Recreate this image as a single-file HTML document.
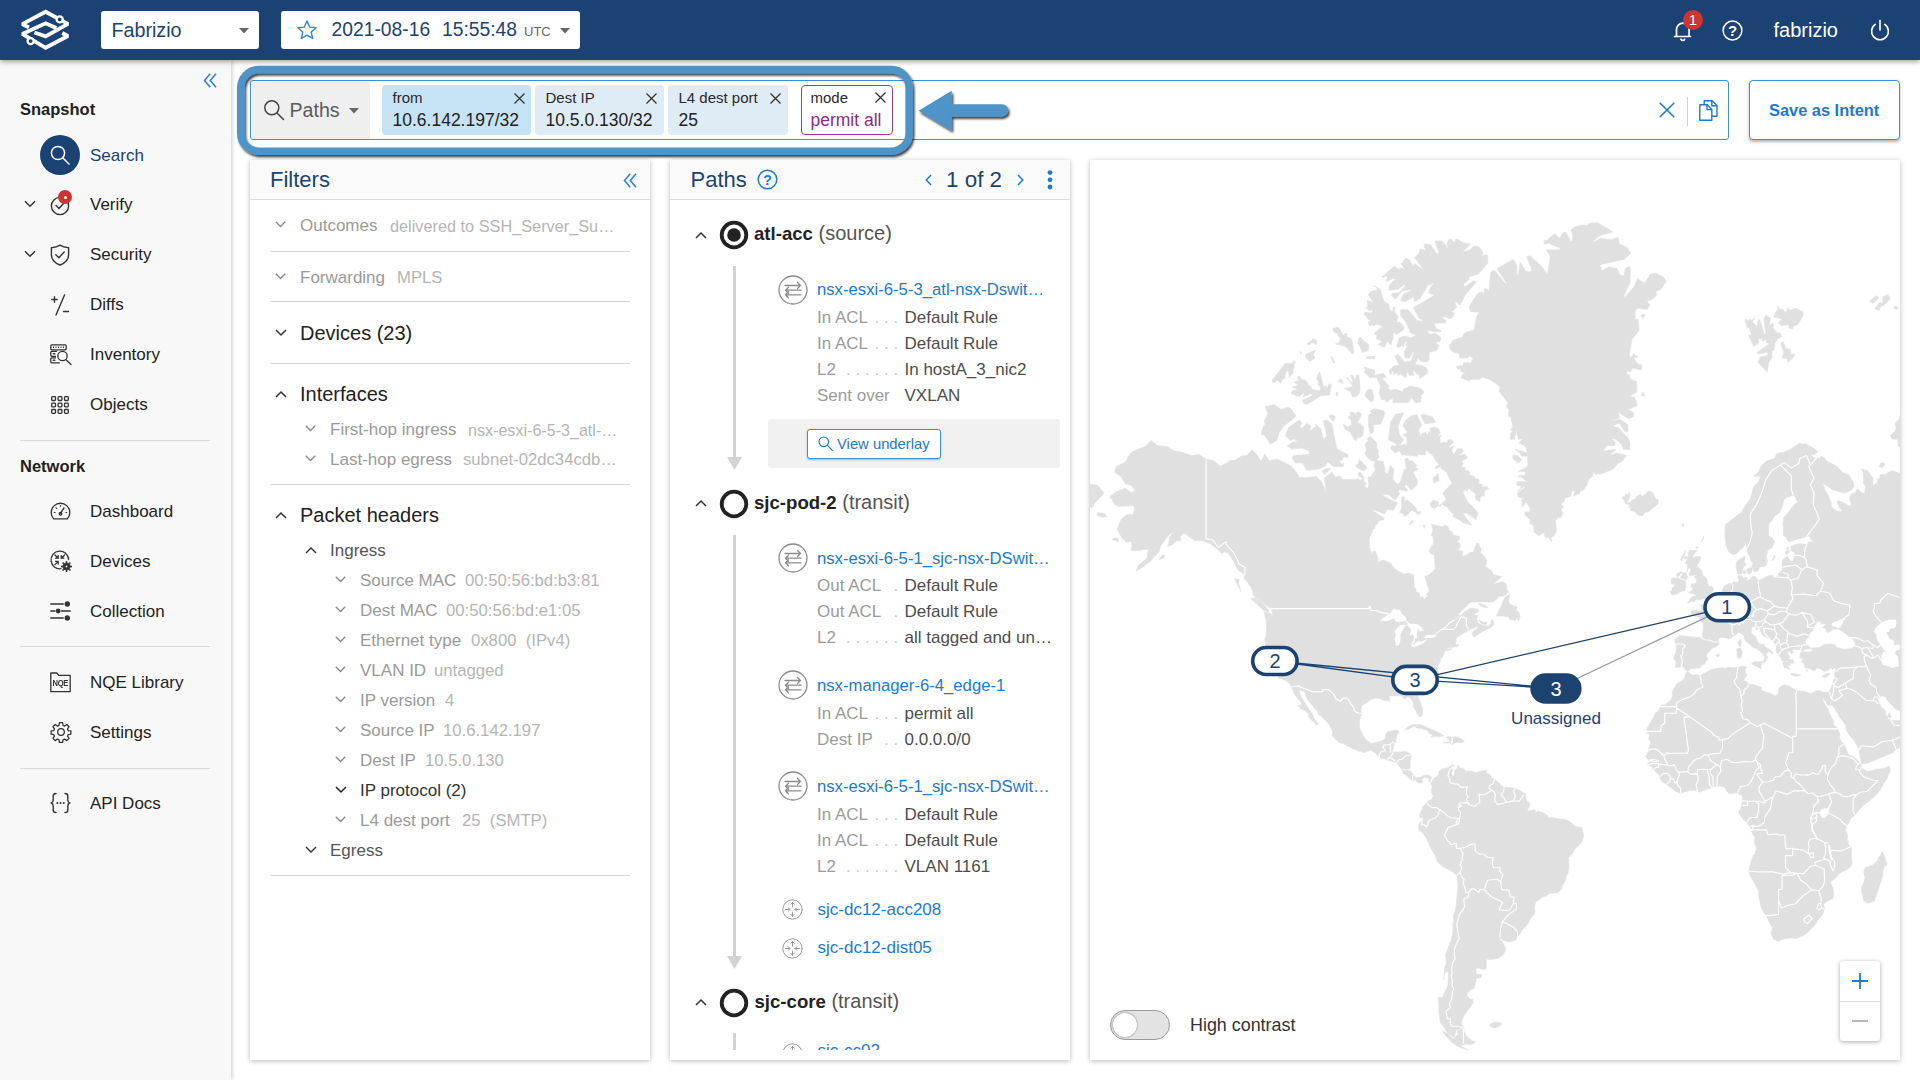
<!DOCTYPE html>
<html lang="en">
<head>
<meta charset="utf-8">
<title>Forward Enterprise - Search</title>
<style>
*{box-sizing:border-box;margin:0;padding:0}
html,body{width:1920px;height:1080px;overflow:hidden;background:#fff}
body{font-family:"Liberation Sans",sans-serif;font-size:17px;color:#222;position:relative}
.a{position:absolute}
.t{position:absolute;white-space:nowrap;line-height:24px;height:24px}
svg{position:absolute;overflow:visible}
/* header */
#hdr{left:0;top:0;width:1920px;height:60px;background:#1b4272;box-shadow:0 2px 5px rgba(0,0,0,.35);z-index:20}
.sel{background:#fff;border-radius:3px;top:11px;height:38px}
.navy{color:#1c4370}
.blue{color:#1d7ad0}
/* sidebar */
#side{left:0;top:60px;width:231px;height:1020px;background:#f8f8f8;box-shadow:1px 0 4px rgba(0,0,0,.22);z-index:10}
.nav{font-size:17px;color:#222;left:90px;margin-top:1px}
.hd{font-weight:bold;font-size:16.5px;color:#222;left:20px}
.sep{position:absolute;left:20px;width:190px;height:1px;background:#d9d9d9}
/* panels */
.panel{background:#fff;box-shadow:0 1px 5px rgba(0,0,0,.28);top:160px;height:900px;overflow:hidden}
.phead{position:absolute;left:0;top:0;right:0;height:40px;background:#fafafa;border-bottom:1px solid #dcdcdc}
.ptitle{font-size:22px;color:#1c4370;top:8px}
.g{color:#9a9a9a}
.gv{color:#b5b5b5;font-size:16.700px}
.t.g,.t.gv,.t.m{margin-top:1.500px}
.t.s20{margin-top:.5px}
.d{color:#222}
.m{color:#555}
.s20{font-size:20px}
.hr{position:absolute;left:20px;width:360px;height:1px;background:#d6d6d6}
.lnk{color:#1d7ad0;font-size:17px;margin-top:1px}
.lab{color:#9b9b9b;font-size:17px;left:147px;margin-top:1.500px}
.val{color:#4d4d4d;font-size:17px;left:234.500px;margin-top:1.500px}
.dots{color:#c8c8c8;font-size:17px;letter-spacing:4.770px;margin-top:1.500px}
.chip{top:85px;height:50px;border-radius:4px}
.cl{font-size:15px;color:#2a2a2a;line-height:20px;top:3px;left:10.5px}
.cv{font-size:17.5px;color:#222;line-height:22px;top:24px;left:10.5px}
</style>
</head>
<body>
<!-- ================= HEADER ================= -->
<div id="hdr" class="a">
  <!-- logo -->
  <svg style="left:0;top:0" width="90" height="60" viewBox="0 0 90 60" fill="none" stroke="#fff" stroke-width="3.900" stroke-linejoin="miter" stroke-miterlimit="2">
    <path d="M28.900 27.500L22.300 24.100L45.600 11.800L67.900 23.900L45.600 36.400L34.400 32.500"/>
    <path d="M56.400 28.100L45.600 23.300L22.300 33.900L45.600 47.800L67.900 36.100L62.200 33.100"/>
    <circle cx="59.700" cy="19.400" r="3.050" fill="#1b4272" stroke-width="2.300"/>
    <circle cx="30.600" cy="41.100" r="3.050" fill="#1b4272" stroke-width="2.300"/>
  </svg>
  <div class="a sel" style="left:101px;width:158px"></div>
  <div class="t navy" style="left:111.5px;top:18px;font-size:19.7px">Fabrizio</div>
  <svg style="left:239px;top:28px" width="10" height="6" viewBox="0 0 10 6"><path d="M0 0H10L5 5.5Z" fill="#666"/></svg>

  <div class="a sel" style="left:281px;width:299px"></div>
  <svg style="left:296px;top:19px" width="22" height="22" viewBox="0 0 24 24" fill="none" stroke="#2a86d9" stroke-width="1.5" stroke-linejoin="round"><path d="M12 2.2l2.9 6.6 7.1.7-5.4 4.8 1.6 7-6.2-3.7-6.2 3.7 1.6-7L2 9.5l7.1-.7z"/></svg>
  <div class="t navy" style="left:331.5px;top:18px;font-size:19.3px">2021-08-16</div>
  <div class="t navy" style="left:442px;top:18px;font-size:19.3px">15:55:48</div>
  <div class="t" style="left:524px;top:20px;font-size:13px;color:#666">UTC</div>
  <svg style="left:560px;top:28px" width="10" height="6" viewBox="0 0 10 6"><path d="M0 0H10L5 5.5Z" fill="#666"/></svg>

  <!-- right icons -->
  <svg style="left:1672px;top:19px" width="22" height="23" viewBox="0 0 22 23" fill="none" stroke="#fff" stroke-width="1.7" stroke-linecap="round" stroke-linejoin="round"><path d="M2.5 17.5h16M4.5 17.5V10.5a6.3 6.3 0 0 1 12.6 0v7"/><path d="M9 20.3a2 2 0 0 0 3.6 0" stroke-width="1.8"/></svg>
  <div class="a" style="left:1683px;top:10px;width:20px;height:20px;border-radius:10px;background:#cb3632"></div>
  <div class="t" style="left:1683px;top:8px;width:20px;text-align:center;color:#fff;font-size:15px">1</div>
  <svg style="left:1722px;top:19.5px" width="21" height="21" viewBox="0 0 21 21" fill="none" stroke="#fff" stroke-width="1.5"><circle cx="10.5" cy="10.5" r="9.4"/></svg>
  <div class="t" style="left:1722px;top:18.5px;width:21px;text-align:center;color:#fff;font-size:15px;font-weight:bold">?</div>
  <div class="t" style="left:1773.5px;top:18px;font-size:20px;color:#fff">fabrizio</div>
  <svg style="left:1869px;top:19px" width="22" height="22" viewBox="0 0 22 22" fill="none" stroke="#fff" stroke-width="1.6" stroke-linecap="round"><path d="M6.2 5.4a8.4 8.4 0 1 0 9.6 0"/><path d="M11 1.5v9.5"/></svg>
</div>

<!-- ================= SIDEBAR ================= -->
<div id="side" class="a">
  <svg style="left:203px;top:13px" width="14" height="15" viewBox="0 0 14 15" fill="none" stroke="#2d7dd2" stroke-width="1.5"><path d="M7.2 0.8L1.5 7.5l5.7 6.7M13 0.8L7.3 7.5l5.7 6.7"/></svg>
  <div class="t hd" style="top:37px">Snapshot</div>
  <!-- Search (active) -->
  <div class="a" style="left:40px;top:75px;width:40px;height:40px;border-radius:20px;background:#1b4272"></div>
  <svg style="left:49px;top:84px" width="22" height="22" viewBox="0 0 22 22" fill="none" stroke="#fff" stroke-width="1.5" stroke-linecap="round"><circle cx="9" cy="9" r="6.6"/><path d="M14 14l6 6"/></svg>
  <div class="t nav" style="top:83px;color:#1c4370">Search</div>

  <!-- Verify -->
  <svg style="left:24px;top:140px" width="12" height="8" viewBox="0 0 12 8" fill="none" stroke="#333" stroke-width="1.5"><path d="M1 1.2l5 5 5-5"/></svg>
  <svg style="left:50px;top:134px" width="22" height="22" viewBox="0 0 22 22" fill="none" stroke="#333" stroke-width="1.4" stroke-linecap="round" stroke-linejoin="round"><circle cx="10" cy="12" r="8.6"/><path d="M6 11.5l3 3 4.5-5"/></svg>
  <div class="a" style="left:58px;top:130px;width:14px;height:14px;border-radius:7px;background:#cb3632"></div>
  <div class="a" style="left:63.5px;top:135.5px;width:3px;height:3px;border-radius:2px;background:#fff"></div>
  <div class="t nav" style="top:132px">Verify</div>

  <!-- Security -->
  <svg style="left:24px;top:190px" width="12" height="8" viewBox="0 0 12 8" fill="none" stroke="#333" stroke-width="1.5"><path d="M1 1.2l5 5 5-5"/></svg>
  <svg style="left:50px;top:184px" width="20" height="22" viewBox="0 0 20 22" fill="none" stroke="#333" stroke-width="1.4" stroke-linecap="round" stroke-linejoin="round"><path d="M10 1.2c2.6 1.8 5.4 2.4 8.6 2.6v7c0 5-3.6 8.4-8.6 10.2C5 19.2 1.400 15.800 1.400 10.800v-7c3.200-.2 6-.8 8.600-2.600z"/><path d="M5.8 10.800l3 3 5.400-5.800"/></svg>
  <div class="t nav" style="top:182px">Security</div>

  <!-- Diffs -->
  <svg style="left:50px;top:233px" width="22" height="24" viewBox="0 0 22 24" fill="none" stroke="#333" stroke-width="1.4" stroke-linecap="round"><path d="M14.500 2L6 22M1.800 6.500h5.400M4.500 3.800v5.400M13.500 18.500h5"/></svg>
  <div class="t nav" style="top:232px">Diffs</div>

  <!-- Inventory -->
  <svg style="left:50px;top:284px" width="24" height="22" viewBox="0 0 24 22" fill="none" stroke="#333" stroke-width="1.300" stroke-linejoin="round"><rect x=".8" y=".8" width="15.400" height="5" rx="1"/><path d="M3 3.300h1M5.500 3.300h1M8 3.300h1M10.500 3.300h1M13 3.300h1" stroke-width="1.400"/><path d="M7 7.300H1.800a1 1 0 0 0-1 1v3a1 1 0 0 0 1 1H6M6 13.800H1.800a1 1 0 0 0-1 1v3a1 1 0 0 0 1 1h8"/><path d="M2.800 9.800h2.500M2.800 16.300h2.500" stroke-width="1.500"/><circle cx="12.500" cy="12" r="4.700"/><path d="M16 15.800l5 4.700" stroke-linecap="round"/></svg>
  <div class="t nav" style="top:282px">Inventory</div>

  <!-- Objects -->
  <svg style="left:51px;top:336px" width="18" height="18" viewBox="0 0 18 18" fill="none" stroke="#333" stroke-width="1.300"><rect x=".7" y=".7" width="3.800" height="3.800" rx=".8"/><rect x="7.100" y=".7" width="3.800" height="3.800" rx=".8"/><rect x="13.500" y=".7" width="3.800" height="3.800" rx=".8"/><rect x=".7" y="7.100" width="3.800" height="3.800" rx=".8"/><rect x="7.100" y="7.100" width="3.800" height="3.800" rx=".8"/><rect x="13.500" y="7.100" width="3.800" height="3.800" rx=".8"/><rect x=".7" y="13.500" width="3.800" height="3.800" rx=".8"/><rect x="7.100" y="13.500" width="3.800" height="3.800" rx=".8"/><rect x="13.500" y="13.500" width="3.800" height="3.800" rx=".8"/></svg>
  <div class="t nav" style="top:332px">Objects</div>

  <div class="sep" style="top:380px"></div>
  <div class="t hd" style="top:394px">Network</div>

  <!-- Dashboard -->
  <svg style="left:50px;top:441px" width="21" height="20" viewBox="0 0 21 20" fill="none" stroke="#333" stroke-width="1.300" stroke-linecap="round" stroke-linejoin="round"><path d="M3.600 17.800A9.300 9.300 0 1 1 17.400 17.800Z"/><path d="M10.500 12.300l3.500-5.500"/><circle cx="10.500" cy="12.800" r="1.300"/><path d="M4.300 11.500h.8M6 6.800l.6.600M10.500 4.500v.8M16 11.500h.7" stroke-width="1.200"/></svg>
  <div class="t nav" style="top:439px">Dashboard</div>

  <!-- Devices -->
  <svg style="left:50px;top:490px" width="23" height="23" viewBox="0 0 23 23" fill="none" stroke="#333" stroke-width="1.300" stroke-linecap="round" stroke-linejoin="round"><path d="M11 18.700A8.800 8.800 0 1 1 18.600 9.500"/><path d="M5 5l3.200 3.200M8.200 5.600v2.600H5.600M14.600 5l-3.200 3.200M13.800 8.200h-2.600V5.600M5 14.600l3.200-3.200M5.600 11.400h2.600V14"/><circle cx="16.500" cy="16.500" r="2.200" stroke-width="2.600"/><path d="M16.500 11.800v1.500M16.500 19.700v1.500M11.800 16.500h1.500M19.700 16.500h1.500M13.200 13.200l1 1M18.800 18.800l1 1M13.200 19.800l1-1M18.800 14.200l1-1" stroke-width="1.800"/></svg>
  <div class="t nav" style="top:489px">Devices</div>

  <!-- Collection -->
  <svg style="left:50px;top:541px" width="21" height="20" viewBox="0 0 21 20" fill="none" stroke="#333" stroke-width="1.400" stroke-linecap="round"><path d="M.8 3h12.400M.8 10h4.200M11.500 10h8.700M.8 17h12.400"/><circle cx="17.300" cy="3" r="2" fill="#333"/><circle cx="8.200" cy="10" r="1.700" fill="#333"/><circle cx="17.300" cy="17" r="2" fill="#333"/></svg>
  <div class="t nav" style="top:539px">Collection</div>

  <div class="sep" style="top:586px"></div>

  <!-- NQE Library -->
  <svg style="left:50px;top:612px" width="21" height="21" viewBox="0 0 21 21" fill="none" stroke="#333" stroke-width="1.300" stroke-linejoin="round"><path d="M.8 19.700V1h6l2 2.300h11.400v16.400z"/></svg>
  <div class="t" style="left:52.500px;top:617px;font-size:7.600px;font-weight:bold;color:#333;line-height:12px;height:12px;letter-spacing:-.3px;transform:scaleY(1.3)">NQE</div>
  <div class="t nav" style="top:610px">NQE Library</div>

  <!-- Settings -->
  <svg style="left:50px;top:661px" width="22" height="22" viewBox="0 0 24 24" fill="none" stroke="#333" stroke-width="1.400" stroke-linejoin="round"><circle cx="12" cy="12" r="3.600"/><path d="M10.300 1.800h3.400l.5 2.900 1.800.8 2.400-1.700 2.400 2.400-1.700 2.400.8 1.800 2.900.5v3.400l-2.900.5-.8 1.800 1.700 2.400-2.400 2.400-2.400-1.700-1.800.8-.5 2.900h-3.400l-.5-2.900-1.800-.8-2.400 1.700-2.400-2.400 1.700-2.400-.8-1.800-2.900-.5v-3.400l2.900-.5.800-1.800-1.700-2.400 2.400-2.400 2.400 1.700 1.800-.8z"/></svg>
  <div class="t nav" style="top:660px">Settings</div>

  <div class="sep" style="top:708px"></div>

  <!-- API Docs -->
  <svg style="left:50px;top:732px" width="21" height="22" viewBox="0 0 21 22" fill="none" stroke="#333" stroke-width="1.400" stroke-linecap="round" stroke-linejoin="round"><path d="M6 1.500c-2 0-2.800.8-2.800 2.600v4c0 1.600-.6 2.500-2 2.900 1.400.4 2 1.300 2 2.900v4c0 1.800.8 2.600 2.800 2.600M15 1.500c2 0 2.800.8 2.800 2.600v4c0 1.600.6 2.500 2 2.900-1.400.4-2 1.300-2 2.900v4c0 1.800-.8 2.600-2.800 2.600"/><path d="M7.300 11h.1M10.500 11h.1M13.700 11h.1" stroke-width="1.900"/></svg>
  <div class="t nav" style="top:731px">API Docs</div>
</div>
<!-- ================= SEARCH BAR ================= -->
<div class="a" style="left:250px;top:80px;width:1479px;height:60px;border:1.5px solid #3d8fd8;border-radius:3px;background:#fff"></div>
<div class="a" style="left:251.5px;top:81.5px;width:118px;height:57px;background:#efefef;border-radius:2px 0 0 2px"></div>
<svg style="left:263px;top:99px" width="22" height="22" viewBox="0 0 22 22" fill="none" stroke="#444" stroke-width="1.5" stroke-linecap="round"><circle cx="8.800" cy="8.800" r="7"/><path d="M14 14l6.500 6.500"/></svg>
<div class="t" style="left:289.500px;top:98px;font-size:19.600px;color:#5a5a5a">Paths</div>
<svg style="left:349px;top:107.500px" width="10" height="6" viewBox="0 0 10 6"><path d="M0 0H10L5 5.500Z" fill="#666"/></svg>

<!-- chips -->
<div class="a chip" style="left:382px;width:149px;background:#c6e2f5">
  <div class="t cl">from</div><div class="t cv">10.6.142.197/32</div>
  <svg style="left:131.500px;top:7.500px" width="11" height="11" viewBox="0 0 11 11" stroke="#333" stroke-width="1.300"><path d="M.5.5l10 10M10.500.5l-10 10"/></svg>
</div>
<div class="a chip" style="left:535px;width:129px;background:#dfecf6">
  <div class="t cl">Dest IP</div><div class="t cv">10.5.0.130/32</div>
  <svg style="left:111px;top:7.500px" width="11" height="11" viewBox="0 0 11 11" stroke="#333" stroke-width="1.300"><path d="M.5.5l10 10M10.500.5l-10 10"/></svg>
</div>
<div class="a chip" style="left:668px;width:120px;background:#dfecf6">
  <div class="t cl">L4 dest port</div><div class="t cv">25</div>
  <svg style="left:102px;top:7.500px" width="11" height="11" viewBox="0 0 11 11" stroke="#333" stroke-width="1.300"><path d="M.5.5l10 10M10.500.5l-10 10"/></svg>
</div>
<div class="a chip" style="left:801px;width:92px;background:#fff;border:1.500px solid #9b3a95;border-radius:4px">
  <div class="t cl" style="left:8.500px;top:1.500px">mode</div><div class="t cv" style="left:8.500px;top:22.500px;color:#8e2a8a">permit all</div>
  <svg style="left:73px;top:6px" width="11" height="11" viewBox="0 0 11 11" stroke="#333" stroke-width="1.300"><path d="M.5.5l10 10M10.500.5l-10 10"/></svg>
</div>

<!-- highlight box + arrow annotation -->
<svg style="left:0;top:0;z-index:15" width="1920" height="200" viewBox="0 0 1920 200" fill="none">
  <defs><filter id="sh" x="-5%" y="-20%" width="110%" height="150%"><feDropShadow dx="1.500" dy="2.200" stdDeviation="1.100" flood-color="#000" flood-opacity=".75"/></filter></defs>
  <rect x="240.800" y="69.600" width="668.400" height="81.600" rx="18" ry="18" stroke="#4f94c9" stroke-width="7.600" filter="url(#sh)"/>
  <path d="M918.500 110.800L951.700 90.800V104.200H1002a6.250 6.250 0 0 1 0 12.500H951.700V130.800Z" fill="#4f94c9" filter="url(#sh)"/>
</svg>

<!-- right side of search input -->
<svg style="left:1659px;top:102px" width="16" height="16" viewBox="0 0 16 16" stroke="#1d7ad0" stroke-width="1.500"><path d="M.7.7l14.600 14.600M15.300.7L.7 15.300"/></svg>
<div class="a" style="left:1687px;top:97px;width:1px;height:29px;background:#d0d0d0"></div>
<svg style="left:1699px;top:99.500px" width="19" height="21" viewBox="0 0 19 21" fill="none" stroke="#1d7ad0" stroke-width="1.400" stroke-linejoin="round"><path d="M5.200 4.800V.8h8l4.800 4.800v10.600h-5.200"/><path d="M12.800.8v5h5"/><path d="M.8 4.800h7.500l4.500 4.500v11H.8z"/><path d="M8 4.800v4.800h4.800"/></svg>
<div class="a" style="left:1749px;top:80px;width:151px;height:60px;border:1.500px solid #3d8fd8;border-radius:4px;background:#fff;box-shadow:0 1.500px 3px rgba(0,0,0,.3)"></div>
<div class="t" style="left:1769px;top:98px;font-size:16.400px;font-weight:bold;color:#1d7ad0">Save as Intent</div>

<!-- ================= FILTERS PANEL ================= -->
<div class="a panel" style="left:250px;width:400px">
  <div class="phead"></div>
  <div class="t ptitle" style="left:20px">Filters</div>
  <svg style="left:373px;top:12.500px" width="14" height="15" viewBox="0 0 14 15" fill="none" stroke="#2d7dd2" stroke-width="1.500"><path d="M7.200.8L1.500 7.500l5.700 6.700M13 .8L7.300 7.500l5.700 6.700"/></svg>

  <svg class="cd" style="left:25px;top:61px" width="11" height="7" viewBox="0 0 11 7" fill="none" stroke="#888" stroke-width="1.300"><path d="M.8.8l4.700 4.700L10.200.8"/></svg>
  <div class="t g" style="left:50px;top:52px">Outcomes</div><div class="t gv" style="left:140px;top:52px;font-size:16.300px">delivered to SSH_Server_Su…</div>
  <div class="hr" style="top:91px"></div>
  <svg style="left:25px;top:113px" width="11" height="7" viewBox="0 0 11 7" fill="none" stroke="#888" stroke-width="1.300"><path d="M.8.8l4.700 4.700L10.200.8"/></svg>
  <div class="t g" style="left:50px;top:104px">Forwarding</div><div class="t gv" style="left:147px;top:104px">MPLS</div>
  <div class="hr" style="top:141px"></div>
  <svg style="left:24.500px;top:169px" width="12" height="8" viewBox="0 0 12 8" fill="none" stroke="#333" stroke-width="1.500"><path d="M1 1l5 5 5-5"/></svg>
  <div class="t d s20" style="left:50px;top:160px">Devices (23)</div>
  <div class="hr" style="top:203px"></div>
  <svg style="left:24.500px;top:230px" width="12" height="8" viewBox="0 0 12 8" fill="none" stroke="#333" stroke-width="1.500"><path d="M1 7l5-5 5 5"/></svg>
  <div class="t d s20" style="left:50px;top:221px">Interfaces</div>
  <svg style="left:55px;top:265px" width="11" height="7" viewBox="0 0 11 7" fill="none" stroke="#888" stroke-width="1.300"><path d="M.8.8l4.700 4.700L10.200.8"/></svg>
  <div class="t g" style="left:80px;top:256px">First-hop ingress</div><div class="t gv" style="left:218px;top:256px;font-size:16.100px">nsx-esxi-6-5-3_atl-…</div>
  <svg style="left:55px;top:295px" width="11" height="7" viewBox="0 0 11 7" fill="none" stroke="#888" stroke-width="1.300"><path d="M.8.8l4.700 4.700L10.200.8"/></svg>
  <div class="t g" style="left:80px;top:286px">Last-hop egress</div><div class="t gv" style="left:213px;top:286px">subnet-02dc34cdb…</div>
  <div class="hr" style="top:324px"></div>
  <svg style="left:24.500px;top:351px" width="12" height="8" viewBox="0 0 12 8" fill="none" stroke="#333" stroke-width="1.500"><path d="M1 7l5-5 5 5"/></svg>
  <div class="t d s20" style="left:50px;top:342px">Packet headers</div>
  <svg style="left:54.500px;top:385.500px" width="12" height="8" viewBox="0 0 12 8" fill="none" stroke="#333" stroke-width="1.400"><path d="M1 7l5-5 5 5"/></svg>
  <div class="t m" style="left:80px;top:377px">Ingress</div>

  <svg style="left:85px;top:416px" width="11" height="7" viewBox="0 0 11 7" fill="none" stroke="#888" stroke-width="1.300"><path d="M.8.8l4.700 4.700L10.200.8"/></svg>
  <div class="t g" style="left:110px;top:407px">Source MAC</div><div class="t gv" style="left:215px;top:407px">00:50:56:bd:b3:81</div>
  <svg style="left:85px;top:446px" width="11" height="7" viewBox="0 0 11 7" fill="none" stroke="#888" stroke-width="1.300"><path d="M.8.8l4.700 4.700L10.200.8"/></svg>
  <div class="t g" style="left:110px;top:437px">Dest MAC</div><div class="t gv" style="left:196px;top:437px">00:50:56:bd:e1:05</div>
  <svg style="left:85px;top:476px" width="11" height="7" viewBox="0 0 11 7" fill="none" stroke="#888" stroke-width="1.300"><path d="M.8.8l4.700 4.700L10.200.8"/></svg>
  <div class="t g" style="left:110px;top:467px">Ethernet type</div><div class="t gv" style="left:221px;top:467px">0x800&nbsp; (IPv4)</div>
  <svg style="left:85px;top:506px" width="11" height="7" viewBox="0 0 11 7" fill="none" stroke="#888" stroke-width="1.300"><path d="M.8.8l4.700 4.700L10.200.8"/></svg>
  <div class="t g" style="left:110px;top:497px">VLAN ID</div><div class="t gv" style="left:184px;top:497px">untagged</div>
  <svg style="left:85px;top:536px" width="11" height="7" viewBox="0 0 11 7" fill="none" stroke="#888" stroke-width="1.300"><path d="M.8.8l4.700 4.700L10.200.8"/></svg>
  <div class="t g" style="left:110px;top:527px">IP version</div><div class="t gv" style="left:195px;top:527px">4</div>
  <svg style="left:85px;top:566px" width="11" height="7" viewBox="0 0 11 7" fill="none" stroke="#888" stroke-width="1.300"><path d="M.8.8l4.700 4.700L10.200.8"/></svg>
  <div class="t g" style="left:110px;top:557px">Source IP</div><div class="t gv" style="left:193px;top:557px">10.6.142.197</div>
  <svg style="left:85px;top:596px" width="11" height="7" viewBox="0 0 11 7" fill="none" stroke="#888" stroke-width="1.300"><path d="M.8.8l4.700 4.700L10.200.8"/></svg>
  <div class="t g" style="left:110px;top:587px">Dest IP</div><div class="t gv" style="left:175px;top:587px">10.5.0.130</div>
  <svg style="left:84.500px;top:625.500px" width="12" height="8" viewBox="0 0 12 8" fill="none" stroke="#222" stroke-width="1.500"><path d="M1 1l5 5 5-5"/></svg>
  <div class="t" style="left:110px;top:618.500px;color:#333">IP protocol (2)</div>
  <svg style="left:85px;top:656px" width="11" height="7" viewBox="0 0 11 7" fill="none" stroke="#888" stroke-width="1.300"><path d="M.8.8l4.700 4.700L10.200.8"/></svg>
  <div class="t g" style="left:110px;top:647px">L4 dest port</div><div class="t gv" style="left:212px;top:647px">25&nbsp; (SMTP)</div>

  <svg style="left:54.500px;top:685.500px" width="12" height="8" viewBox="0 0 12 8" fill="none" stroke="#333" stroke-width="1.400"><path d="M1 1l5 5 5-5"/></svg>
  <div class="t m" style="left:80px;top:677px">Egress</div>
  <div class="hr" style="top:715px"></div>
</div>
<!-- ================= PATHS PANEL ================= -->
<div class="a panel" style="left:670px;width:400px">
  <div class="phead"></div>
  <div class="t ptitle" style="left:20.500px">Paths</div>
  <svg style="left:87px;top:9px" width="21" height="21" viewBox="0 0 21 21" fill="none" stroke="#1d7ad0" stroke-width="1.500"><circle cx="10.500" cy="10.500" r="9.300"/></svg>
  <div class="t" style="left:87px;top:8px;width:21px;text-align:center;color:#1d7ad0;font-size:14px;font-weight:bold">?</div>
  <svg style="left:255px;top:14px" width="7" height="12" viewBox="0 0 7 12" fill="none" stroke="#1d7ad0" stroke-width="1.500"><path d="M6 1L1.200 6 6 11"/></svg>
  <div class="t ptitle" style="left:276px;font-size:22.400px">1 of 2</div>
  <svg style="left:346.500px;top:14px" width="7" height="12" viewBox="0 0 7 12" fill="none" stroke="#1d7ad0" stroke-width="1.500"><path d="M1 1l4.800 5L1 11"/></svg>
  <svg style="left:377px;top:10px" width="6" height="20" viewBox="0 0 6 20" fill="#1d7ad0"><circle cx="3" cy="2.600" r="2.400"/><circle cx="3" cy="9.800" r="2.400"/><circle cx="3" cy="17" r="2.400"/></svg>

  <!-- scroll area clipped at y=890 -->
  <div class="a" style="left:0;top:41px;width:400px;height:849px;overflow:hidden">
   <div class="a" style="left:0;top:-41px;width:400px;height:1000px">

    <!-- group 1 -->
    <svg style="left:24.500px;top:71px" width="12" height="8" viewBox="0 0 12 8" fill="none" stroke="#333" stroke-width="1.500"><path d="M1 7l5-5 5 5"/></svg>
    <svg style="left:49px;top:60px" width="30" height="30" viewBox="0 0 30 30"><circle cx="15" cy="15" r="12.300" fill="none" stroke="#222" stroke-width="3.800"/><circle cx="15" cy="15" r="6.800" fill="#222"/></svg>
    <div class="t s20" style="left:84px;top:60.500px;color:#222"><b style="font-size:18.600px">atl-acc</b> <span class="m">(source)</span></div>
    <div class="a" style="left:63.200px;top:105.500px;width:2.400px;height:192px;background:#d2d2d2"></div>
    <svg style="left:57px;top:296.500px" width="15" height="13" viewBox="0 0 15 13"><path d="M0 0H15L7.500 13Z" fill="#d2d2d2"/></svg>

    <svg class="dv" style="left:107.500px;top:115px" width="30" height="30" viewBox="0 0 30 30" fill="none" stroke="#8c8c8c" stroke-width="1.300" stroke-linecap="round" stroke-linejoin="round"><circle cx="15" cy="15" r="14"/><path d="M7 10.500h15.500M19.500 7.500l3 3-3 3M23 15.200H7.500M10.500 12.200l-3 3 3 3M23 19.800H7.500M10.500 16.800l-3 3 3 3"/></svg>
    <div class="t lnk" style="left:147px;top:117px;font-size:16.700px">nsx-esxi-6-5-3_atl-nsx-Dswit…</div>
    <div class="t lab" style="top:144.400px">In ACL</div><div class="t dots" style="right:167px;top:144.400px">...</div><div class="t val" style="top:144.400px">Default Rule</div>
    <div class="t lab" style="top:170.500px">In ACL</div><div class="t dots" style="right:167px;top:170.500px">...</div><div class="t val" style="top:170.500px">Default Rule</div>
    <div class="t lab" style="top:196.600px">L2</div><div class="t dots" style="right:167px;top:196.600px">......</div><div class="t val" style="top:196.600px">In hostA_3_nic2</div>
    <div class="t lab" style="top:222.700px">Sent over</div><div class="t val" style="top:222.700px">VXLAN</div>

    <div class="a" style="left:98px;top:259px;width:292px;height:49px;background:#f1f1f1;border-radius:3px"></div>
    <div class="a" style="left:137px;top:269px;width:134px;height:30px;background:#fff;border:1.500px solid #3d8fd8;border-radius:3px;box-shadow:0 1px 2px rgba(0,0,0,.25)"></div>
    <svg style="left:148px;top:276px" width="15" height="15" viewBox="0 0 15 15" fill="none" stroke="#1d7ad0" stroke-width="1.200" stroke-linecap="round"><circle cx="5.800" cy="5.800" r="4.800"/><path d="M9.400 9.400l5 5"/></svg>
    <div class="t" style="left:167px;top:272px;font-size:14.800px;color:#1d7ad0">View underlay</div>

    <!-- group 2 -->
    <svg style="left:24.500px;top:339px" width="12" height="8" viewBox="0 0 12 8" fill="none" stroke="#333" stroke-width="1.500"><path d="M1 7l5-5 5 5"/></svg>
    <svg style="left:49px;top:328.500px" width="30" height="30" viewBox="0 0 30 30"><circle cx="15" cy="15" r="12.300" fill="none" stroke="#222" stroke-width="3.800"/></svg>
    <div class="t s20" style="left:84px;top:329.500px;color:#222"><b style="font-size:18.600px">sjc-pod-2</b> <span class="m">(transit)</span></div>
    <div class="a" style="left:63.200px;top:375px;width:2.400px;height:422px;background:#d2d2d2"></div>
    <svg style="left:57px;top:795.500px" width="15" height="13" viewBox="0 0 15 13"><path d="M0 0H15L7.500 13Z" fill="#d2d2d2"/></svg>

    <svg style="left:107.500px;top:383px" width="30" height="30" viewBox="0 0 30 30" fill="none" stroke="#8c8c8c" stroke-width="1.300" stroke-linecap="round" stroke-linejoin="round"><circle cx="15" cy="15" r="14"/><path d="M7 10.500h15.500M19.500 7.500l3 3-3 3M23 15.200H7.500M10.500 12.200l-3 3 3 3M23 19.800H7.500M10.500 16.800l-3 3 3 3"/></svg>
    <div class="t lnk" style="left:147px;top:385.500px;font-size:16.700px">nsx-esxi-6-5-1_sjc-nsx-DSwit…</div>
    <div class="t lab" style="top:412.600px">Out ACL</div><div class="t dots" style="right:167px;top:412.600px">.</div><div class="t val" style="top:412.600px">Default Rule</div>
    <div class="t lab" style="top:438.700px">Out ACL</div><div class="t dots" style="right:167px;top:438.700px">.</div><div class="t val" style="top:438.700px">Default Rule</div>
    <div class="t lab" style="top:464.800px">L2</div><div class="t dots" style="right:167px;top:464.800px">......</div><div class="t val" style="top:464.800px">all tagged and un…</div>

    <svg style="left:107.500px;top:510px" width="30" height="30" viewBox="0 0 30 30" fill="none" stroke="#8c8c8c" stroke-width="1.300" stroke-linecap="round" stroke-linejoin="round"><circle cx="15" cy="15" r="14"/><path d="M7 10.500h15.500M19.500 7.500l3 3-3 3M23 15.200H7.500M10.500 12.200l-3 3 3 3M23 19.800H7.500M10.500 16.800l-3 3 3 3"/></svg>
    <div class="t lnk" style="left:147px;top:513px;font-size:16.700px">nsx-manager-6-4_edge-1</div>
    <div class="t lab" style="top:540.200px">In ACL</div><div class="t dots" style="right:167px;top:540.200px">...</div><div class="t val" style="top:540.200px">permit all</div>
    <div class="t lab" style="top:566.300px">Dest IP</div><div class="t dots" style="right:167px;top:566.300px">..</div><div class="t val" style="top:566.300px">0.0.0.0/0</div>

    <svg style="left:107.500px;top:611px" width="30" height="30" viewBox="0 0 30 30" fill="none" stroke="#8c8c8c" stroke-width="1.300" stroke-linecap="round" stroke-linejoin="round"><circle cx="15" cy="15" r="14"/><path d="M7 10.500h15.500M19.500 7.500l3 3-3 3M23 15.200H7.500M10.500 12.200l-3 3 3 3M23 19.800H7.500M10.500 16.800l-3 3 3 3"/></svg>
    <div class="t lnk" style="left:147px;top:614px;font-size:16.700px">nsx-esxi-6-5-1_sjc-nsx-DSwit…</div>
    <div class="t lab" style="top:641.200px">In ACL</div><div class="t dots" style="right:167px;top:641.200px">...</div><div class="t val" style="top:641.200px">Default Rule</div>
    <div class="t lab" style="top:667.300px">In ACL</div><div class="t dots" style="right:167px;top:667.300px">...</div><div class="t val" style="top:667.300px">Default Rule</div>
    <div class="t lab" style="top:693.400px">L2</div><div class="t dots" style="right:167px;top:693.400px">......</div><div class="t val" style="top:693.400px">VLAN 1161</div>

    <svg style="left:112px;top:739px" width="21" height="21" viewBox="0 0 21 21" fill="none" stroke="#9a9a9a" stroke-width="1" stroke-linecap="round" stroke-linejoin="round"><circle cx="10.500" cy="10.500" r="9.700"/><path d="M10.500 3.500v4.500M8.800 5.200l1.700-1.700 1.700 1.700M10.500 17.500v-4.500M8.800 15.300l1.700 1.700 1.700-1.700M3.500 10.500h4.500M6.300 8.800l1.700 1.700-1.700 1.700M17.500 10.500h-4.500M14.700 8.800l-1.700 1.700 1.700 1.700"/></svg>
    <div class="t lnk" style="left:147.500px;top:736.500px">sjc-dc12-acc208</div>
    <svg style="left:112px;top:777.500px" width="21" height="21" viewBox="0 0 21 21" fill="none" stroke="#9a9a9a" stroke-width="1" stroke-linecap="round" stroke-linejoin="round"><circle cx="10.500" cy="10.500" r="9.700"/><path d="M10.500 3.500v4.500M8.800 5.200l1.700-1.700 1.700 1.700M10.500 17.500v-4.500M8.800 15.300l1.700 1.700 1.700-1.700M3.500 10.500h4.500M6.300 8.800l1.700 1.700-1.700 1.700M17.500 10.500h-4.500M14.700 8.800l-1.700 1.700 1.700 1.700"/></svg>
    <div class="t lnk" style="left:147.500px;top:775.400px">sjc-dc12-dist05</div>

    <!-- group 3 -->
    <svg style="left:24.500px;top:838px" width="12" height="8" viewBox="0 0 12 8" fill="none" stroke="#333" stroke-width="1.500"><path d="M1 7l5-5 5 5"/></svg>
    <svg style="left:49.400px;top:827.900px" width="30" height="30" viewBox="0 0 30 30"><circle cx="15" cy="15" r="12.300" fill="none" stroke="#222" stroke-width="3.800"/></svg>
    <div class="t s20" style="left:84.500px;top:828.500px;color:#222"><b style="font-size:18.600px">sjc-core</b> <span class="m">(transit)</span></div>
    <div class="a" style="left:63.200px;top:872.500px;width:2.400px;height:60px;background:#d2d2d2"></div>
    <svg style="left:112px;top:883px" width="21" height="21" viewBox="0 0 21 21" fill="none" stroke="#9a9a9a" stroke-width="1" stroke-linecap="round" stroke-linejoin="round"><circle cx="10.500" cy="10.500" r="9.700"/><path d="M10.500 3.500v4.500M8.800 5.200l1.700-1.700 1.700 1.700"/></svg>
    <div class="t lnk" style="left:147.500px;top:878px">sjc-cc02 &#8211;</div>
   </div>
  </div>
</div>
<!-- ================= MAP PANEL ================= -->
<div class="a panel" style="left:1090px;width:810px">
<svg style="left:0;top:0" width="810" height="900" viewBox="1090 160 810 900">
<g fill="#e0e0e0" stroke="#e0e0e0" stroke-width=".6" stroke-linejoin="round"><path d="M1109.7,497.0 1116.1,491.8 1124.9,488.2 1131.7,492.7 1134.9,490.0 1131.3,485.5 1125.3,483.7 1120.7,476.3 1114.3,472.0 1116.4,466.6 1126.0,461.6 1128.1,456.5 1131.7,452.3 1138.5,449.1 1145.6,446.4 1150.9,440.4 1158.0,445.9 1166.9,446.4 1174.0,450.7 1180.1,451.8 1191.8,455.5 1198.9,454.4 1206.0,459.1 1213.1,460.6 1220.2,466.1 1225.6,463.6 1230.9,460.1 1234.5,460.6 1241.6,456.0 1246.9,455.5 1252.2,449.7 1255.8,453.4 1261.1,461.1 1264.7,453.9 1268.9,460.6 1277.1,459.1 1291.3,466.1 1298.5,475.3 1298.1,477.2 1305.6,477.7 1316.2,476.3 1320.0,480.6 1321.1,481.1 1326.1,491.7 1324.4,477.8 1328.3,475.0 1331.7,472.0 1335.6,476.9 1339.4,476.1 1343.3,479.4 1356.7,479.4 1357.8,478.3 1360.0,480.6 1362.8,478.9 1358.3,475.6 1358.7,472.4 1360.2,472.0 1363.6,476.7 1364.2,482.8 1366.7,482.8 1364.4,486.1 1367.8,488.9 1368.9,483.9 1368.0,477.2 1370.9,476.7 1375.3,470.0 1373.9,465.8 1375.6,461.1 1370.6,460.6 1364.7,453.9 1366.7,450.0 1365.0,445.0 1366.4,442.0 1368.7,441.1 1367.2,438.9 1370.0,436.1 1376.7,442.8 1376.7,447.8 1378.3,451.1 1377.8,453.3 1378.9,457.2 1376.1,460.6 1384.2,461.7 1383.1,463.6 1385.3,469.1 1384.2,471.3 1387.8,474.4 1390.2,465.3 1393.9,469.4 1392.8,478.9 1397.2,484.4 1400.6,481.7 1403.9,469.8 1406.4,469.1 1405.0,459.1 1407.8,458.3 1408.9,460.6 1412.2,460.6 1416.4,465.0 1415.8,467.8 1418.3,469.1 1413.1,472.4 1417.8,481.3 1416.7,485.3 1411.3,490.0 1406.4,484.7 1404.2,486.1 1407.8,490.6 1406.9,491.3 1399.4,489.4 1398.0,491.3 1400.0,493.3 1395.8,499.4 1393.1,498.9 1388.9,494.4 1383.1,494.4 1383.3,496.1 1397.6,503.1 1393.3,510.2 1387.2,509.4 1384.7,513.9 1373.1,509.4 1373.3,511.1 1384.2,518.0 1383.9,519.4 1378.3,521.1 1377.6,523.9 1375.3,524.4 1374.7,528.3 1372.8,529.4 1369.4,538.3 1369.4,547.2 1372.2,554.4 1373.3,551.1 1375.6,551.1 1378.3,560.0 1377.5,562.5 1383.3,560.0 1390.8,563.3 1395.0,569.2 1404.2,574.2 1408.3,573.0 1413.7,575.0 1414.2,587.5 1416.3,589.2 1415.8,591.7 1419.2,593.0 1419.7,597.5 1422.5,596.7 1424.7,600.0 1425.8,596.7 1428.0,597.5 1426.7,593.7 1429.2,590.8 1424.7,576.7 1430.0,574.2 1435.3,568.7 1434.2,554.7 1430.3,553.3 1429.2,551.3 1432.0,545.0 1433.3,545.3 1433.3,536.7 1431.3,535.3 1433.0,530.0 1431.3,524.2 1442.5,527.0 1445.0,525.0 1448.0,526.7 1449.2,530.8 1452.0,531.7 1453.0,534.7 1459.7,536.7 1459.2,540.0 1455.8,541.3 1459.7,543.3 1460.3,547.5 1457.0,549.7 1463.0,551.3 1462.0,556.3 1466.7,555.0 1470.8,552.0 1473.0,552.5 1476.7,543.3 1478.3,543.3 1481.3,550.0 1480.0,552.5 1485.0,556.7 1486.7,560.8 1485.3,566.7 1491.7,570.8 1493.0,574.7 1501.7,576.7 1492.5,584.2 1502.5,581.7 1506.7,584.2 1507.0,590.0 1508.7,592.0 1504.7,595.8 1499.2,596.3 1493.3,602.0 1470.8,602.0 1458.3,614.2 1454.7,612.5 1460.0,615.3 1451.7,623.3 1458.5,618.2 1463.8,612.3 1470.9,608.0 1478.7,609.4 1477.7,612.3 1473.4,613.7 1476.2,616.1 1477.7,615.0 1476.6,619.2 1478.0,622.8 1480.5,624.4 1485.1,625.9 1488.7,625.9 1490.5,623.9 1492.2,619.2 1494.4,624.4 1490.5,627.9 1483.3,631.0 1478.0,634.4 1474.5,636.9 1472.3,635.4 1472.7,631.9 1478.0,627.9 1477.3,625.9 1474.5,627.9 1472.7,628.2 1469.1,630.5 1463.8,632.9 1462.0,634.4 1457.7,636.4 1456.0,639.3 1456.3,641.0 1454.9,642.7 1456.3,644.6 1458.5,645.1 1458.3,643.9 1458.6,645.8 1456.3,646.5 1453.1,647.0 1449.6,647.7 1445.3,649.4 1449.6,649.4 1451.3,648.4 1451.7,648.9 1448.5,650.3 1444.2,651.0 1444.2,653.6 1443.2,655.9 1441.0,658.4 1439.3,656.4 1440.3,659.1 1440.3,661.4 1438.5,665.0 1437.1,666.8 1436.4,662.7 1435.3,657.3 1436.1,662.7 1435.7,666.8 1437.1,667.7 1438.2,671.6 1438.9,674.9 1435.3,677.7 1431.8,679.0 1430.0,680.7 1426.5,682.5 1424.0,685.0 1420.1,688.4 1418.3,693.0 1417.9,695.4 1419.3,700.0 1420.9,703.4 1422.5,709.2 1422.5,714.0 1421.5,716.4 1419.0,716.6 1416.9,713.6 1415.8,710.8 1413.3,706.4 1413.3,703.2 1412.2,700.4 1409.7,697.5 1407.6,696.9 1405.1,698.5 1403.7,698.3 1401.6,695.7 1397.3,695.7 1394.5,695.9 1390.9,695.7 1389.1,696.7 1389.5,699.6 1390.5,701.2 1387.3,700.6 1383.8,700.4 1380.2,698.7 1375.6,698.1 1371.3,699.3 1370.3,700.0 1367.8,702.0 1364.2,704.0 1361.7,706.4 1361.0,710.0 1361.9,713.4 1360.3,717.1 1359.6,721.8 1359.4,727.6 1361.4,731.8 1362.5,734.5 1365.7,739.4 1367.8,741.3 1371.3,743.4 1376.7,742.2 1380.2,741.5 1382.7,740.5 1384.9,738.7 1385.4,737.0 1385.9,733.4 1387.3,732.0 1388.6,731.5 1394.5,730.3 1397.8,730.3 1398.9,732.0 1396.6,735.6 1396.2,738.7 1395.5,742.8 1394.1,742.0 1393.7,745.8 1393.4,749.5 1391.3,751.7 1394.5,752.1 1398.0,752.1 1401.6,751.7 1405.1,751.5 1407.6,752.1 1410.8,754.3 1411.7,755.0 1410.8,758.7 1410.1,762.4 1410.3,766.0 1409.7,768.9 1409.7,770.0 1412.2,773.3 1414.0,775.1 1415.1,776.9 1417.6,777.6 1420.1,777.2 1422.9,776.1 1423.3,775.6 1426.5,774.9 1430.0,775.8 1432.3,778.1 1430.4,783.3 1428.6,780.5 1429.3,779.0 1424.7,777.0 1421.5,779.4 1422.9,782.4 1419.7,783.3 1416.9,781.9 1415.1,779.7 1412.6,780.3 1409.7,778.8 1406.5,775.1 1404.8,774.7 1402.3,772.5 1402.6,770.0 1399.8,766.7 1396.9,763.5 1395.9,762.0 1392.7,761.6 1388.1,760.4 1385.6,759.1 1382.0,758.4 1379.3,756.7 1374.9,752.8 1371.3,750.6 1369.6,750.6 1364.2,752.6 1358.9,751.0 1352.1,748.2 1346.5,745.4 1344.0,744.1 1339.3,742.6 1336.5,740.0 1331.5,734.9 1332.9,733.9 1332.2,730.7 1329.0,724.2 1324.1,719.1 1319.8,715.2 1318.4,714.8 1316.9,710.4 1314.1,708.0 1313.0,705.6 1309.1,702.0 1306.3,697.1 1305.2,692.1 1299.5,689.8 1299.5,693.0 1301.3,697.1 1303.8,701.2 1306.3,705.2 1308.4,708.4 1311.3,712.4 1313.7,717.1 1315.2,720.3 1317.3,722.2 1318.2,724.2 1316.6,725.3 1315.2,723.0 1310.2,719.1 1308.4,716.0 1308.4,713.2 1304.9,710.4 1300.9,708.8 1298.1,705.8 1301.3,705.2 1301.7,702.8 1298.8,699.6 1295.6,695.9 1293.8,693.0 1292.6,689.4 1291.0,686.7 1290.5,685.9 1290.3,684.2 1287.8,681.8 1286.4,681.4 1286.0,680.3 1283.9,679.9 1281.7,678.6 1278.9,678.4 1278.4,675.4 1276.1,673.0 1273.9,669.0 1273.6,667.4 1272.1,666.3 1271.8,663.9 1270.0,662.7 1267.5,658.6 1265.0,651.5 1266.1,648.9 1265.7,645.4 1264.7,640.3 1266.1,635.9 1266.3,631.5 1266.6,624.9 1266.3,623.1 1266.1,619.7 1264.0,612.1 1268.2,613.1 1271.1,613.4 1272.1,617.1 1272.5,612.9 1270.9,608.6 1269.3,606.9 1266.8,605.9 1263.6,603.1 1261.1,600.9 1255.8,598.1 1253.3,594.7 1252.6,590.6 1250.8,587.1 1248.0,583.0 1244.4,578.2 1243.7,575.4 1241.6,572.0 1238.7,570.7 1236.6,567.6 1234.5,563.1 1231.6,557.9 1228.1,553.2 1224.5,551.8 1221.7,553.2 1217.0,549.1 1210.6,543.9 1204.9,541.4 1200.7,540.4 1195.3,540.7 1189.3,537.1 1186.5,534.2 1182.9,533.5 1180.4,536.4 1181.1,540.7 1176.1,541.1 1172.2,544.9 1167.6,546.3 1168.7,543.5 1169.4,537.1 1174.0,532.0 1170.5,533.5 1166.9,537.1 1164.1,541.4 1160.5,546.3 1159.1,551.8 1154.5,556.5 1150.9,561.1 1145.6,565.0 1140.2,568.8 1136.3,571.1 1138.5,565.0 1143.8,561.1 1147.3,557.2 1147.7,551.8 1149.1,549.4 1143.8,549.4 1138.5,550.5 1132.4,550.5 1131.0,550.1 1132.1,545.6 1131.3,541.4 1126.0,541.8 1121.7,537.8 1119.3,532.8 1117.1,529.0 1120.0,522.2 1121.4,519.1 1124.2,516.4 1127.8,514.4 1133.1,514.4 1134.9,507.9 1133.1,505.4 1127.8,505.9 1119.3,506.3 1115.3,505.0 1111.8,499.6Z M1496.5,616.1 1502.9,616.1 1508.2,616.6 1510.0,619.7 1515.3,620.2 1516.8,617.6 1518.9,621.0 1520.1,616.6 1518.9,612.3 1516.1,610.2 1517.1,606.9 1513.6,605.9 1509.3,603.7 1508.6,599.8 1510.0,594.1 1505.4,596.9 1503.3,600.3 1501.1,606.4 1498.6,611.3Z M1478.0,603.9 1483.3,607.2 1488.0,608.0 1485.1,605.3 1479.8,603.4Z M1478.4,619.7 1483.3,622.3 1486.9,622.1 1485.8,624.4 1481.6,623.9 1479.4,621.3Z M1250.8,598.6 1257.6,604.8 1262.9,609.7 1268.2,612.3 1268.6,610.2 1263.6,604.2 1260.8,601.4 1254.4,598.1Z M1234.5,578.8 1238.0,586.0 1241.2,591.8 1238.7,584.2 1239.1,579.4Z M1158.7,559.8 1164.1,557.9 1164.8,555.2 1162.3,554.9Z M1112.1,539.3 1118.2,542.1 1118.2,538.6 1115.3,537.8Z M1096.9,515.2 1102.9,517.2 1107.2,516.8 1104.7,513.6 1097.6,512.4Z M1049.6,526.0 1069.1,523.0 1074.5,515.2 1079.8,505.4 1086.9,504.6 1092.2,507.9 1094.7,502.9 1100.8,497.0 1104.0,492.7 1097.6,485.5 1086.9,483.7 1083.3,478.1 1072.7,470.5 1067.3,466.6 1049.6,460.6Z M1432.3,778.1 1434.3,780.5 1433.9,778.3 1436.1,776.9 1438.5,775.1 1438.9,771.8 1441.2,769.5 1443.5,768.6 1447.8,767.8 1452.6,764.4 1454.5,766.0 1451.5,767.5 1452.8,769.8 1451.3,773.3 1453.1,776.5 1454.9,774.0 1454.2,770.4 1457.4,768.2 1457.7,765.5 1458.8,765.3 1459.5,767.8 1464.1,768.9 1464.9,771.1 1469.1,771.1 1472.3,771.1 1475.9,772.9 1479.1,771.5 1483.3,770.7 1487.3,770.7 1485.1,772.5 1488.3,773.6 1490.5,775.1 1491.2,778.3 1494.0,778.7 1499.0,783.0 1500.6,784.8 1504.0,787.6 1511.1,787.8 1515.3,788.3 1521.4,791.4 1523.9,793.3 1525.3,793.7 1526.0,798.3 1527.1,801.5 1529.9,803.0 1529.6,805.8 1527.8,809.0 1527.1,811.1 1534.9,809.7 1535.6,812.2 1534.9,814.2 1537.4,811.1 1542.0,812.6 1546.3,814.3 1548.4,817.2 1549.8,817.9 1552.7,817.4 1558.0,819.0 1563.3,819.1 1566.9,820.0 1570.5,822.2 1574.0,825.4 1575.8,826.4 1579.3,827.2 1582.0,827.5 1582.2,829.7 1583.6,834.5 1583.3,837.7 1581.8,841.9 1580.4,843.5 1577.9,846.5 1575.6,848.0 1574.0,850.5 1572.2,854.2 1570.5,855.6 1568.7,857.5 1568.7,862.2 1569.0,866.6 1568.3,870.4 1568.0,873.7 1566.2,876.0 1565.8,880.1 1564.1,882.7 1562.3,885.4 1561.6,889.2 1558.4,892.3 1558.0,892.7 1553.7,892.9 1549.1,893.8 1545.9,896.2 1542.7,896.9 1540.2,898.9 1537.0,900.9 1535.3,903.2 1534.5,906.8 1534.9,911.2 1534.2,914.8 1531.3,917.6 1529.6,920.1 1528.5,923.0 1526.0,926.3 1522.1,929.8 1520.3,933.4 1517.5,936.6 1516.1,939.4 1512.0,941.8 1507.5,941.6 1501.7,939.6 1499.7,937.7 1499.9,940.3 1502.9,942.0 1504.0,945.0 1505.7,947.7 1505.7,950.3 1502.7,955.3 1498.6,958.0 1494.0,959.1 1488.7,959.6 1486.2,958.9 1486.2,962.1 1486.5,966.7 1485.8,968.6 1483.3,969.8 1479.8,968.2 1476.2,968.2 1475.9,971.5 1476.6,974.8 1481.2,974.3 1481.2,977.7 1478.4,978.2 1476.2,977.7 1476.2,980.1 1475.2,983.6 1474.1,988.6 1470.9,989.6 1467.3,993.1 1467.0,995.7 1469.8,998.8 1473.0,999.8 1473.0,1002.7 1470.5,1006.7 1467.0,1011.1 1464.1,1015.5 1462.0,1019.9 1461.3,1024.2 1464.3,1028.2 1460.2,1028.5 1455.6,1030.9 1455.3,1032.9 1453.8,1037.4 1450.3,1035.0 1446.7,1032.0 1444.2,1027.4 1440.7,1023.3 1439.6,1017.7 1438.9,1012.1 1438.9,1006.7 1438.5,1001.4 1438.5,997.2 1442.1,997.8 1444.2,993.6 1446.0,990.1 1447.8,986.1 1448.1,980.1 1448.5,975.3 1448.0,971.5 1444.9,972.4 1443.5,980.1 1444.6,972.4 1444.6,966.7 1446.4,963.7 1446.0,958.9 1445.7,953.9 1447.1,951.2 1447.6,949.9 1449.2,944.6 1451.3,940.3 1452.6,933.6 1453.1,929.2 1452.8,924.6 1453.7,920.7 1453.1,916.4 1454.9,911.6 1455.4,909.0 1456.3,904.8 1456.7,900.9 1457.0,895.6 1457.7,889.6 1457.9,882.4 1457.4,876.0 1453.7,872.8 1449.6,870.0 1444.9,867.8 1440.0,864.4 1436.4,860.4 1436.1,858.7 1435.3,855.6 1433.0,852.2 1431.1,848.4 1429.3,844.7 1427.9,841.5 1426.3,837.9 1424.0,834.7 1421.5,831.8 1419.0,830.6 1419.0,827.2 1418.2,825.7 1419.3,823.6 1421.1,821.5 1422.9,820.7 1423.4,817.9 1421.1,817.9 1419.5,816.8 1420.2,812.6 1422.5,809.0 1422.5,806.7 1424.1,805.5 1427.2,802.6 1428.9,800.1 1431.8,799.8 1433.4,795.1 1431.8,794.1 1431.6,789.4 1432.3,785.8 1430.4,783.3Z M1463.4,1030.0 1464.5,1032.0 1467.0,1036.8 1472.7,1041.1 1475.7,1042.0 1470.9,1044.5 1465.6,1044.1 1460.2,1046.0 1465.6,1048.5 1468.1,1050.1 1462.0,1047.9 1456.7,1046.0 1451.3,1041.7 1444.9,1034.4 1442.1,1030.9 1447.8,1033.8 1453.1,1039.2 1455.3,1036.8 1456.7,1035.6 1458.5,1034.4 1457.0,1032.0 1460.6,1029.1Z M1489.4,1025.0 1494.0,1022.2 1499.3,1022.2 1502.2,1023.9 1498.3,1026.8 1495.8,1027.9 1492.2,1027.4Z M1405.3,729.4 1408.7,726.1 1412.9,724.7 1417.6,724.4 1422.2,725.1 1426.5,727.2 1431.8,729.5 1437.1,731.8 1440.7,733.7 1443.7,735.5 1440.7,736.8 1435.3,736.6 1431.1,737.0 1432.9,734.5 1429.3,733.7 1427.2,730.3 1421.1,728.8 1416.5,728.0 1415.1,726.1 1410.5,728.0 1408.7,729.2Z M1442.6,742.6 1446.4,743.0 1450.3,743.2 1452.4,744.9 1454.9,742.8 1458.5,742.4 1462.4,742.4 1464.3,741.7 1462.0,739.4 1458.8,737.5 1454.9,736.8 1452.4,737.3 1448.5,736.6 1446.4,737.5 1448.5,739.0 1449.9,741.7 1446.0,741.9Z M1686.4,672.5 1688.5,672.1 1692.1,675.1 1693.5,674.9 1696.9,674.7 1700.2,675.6 1705.0,673.0 1707.7,671.6 1710.9,669.7 1718.2,668.1 1721.6,667.7 1725.5,668.3 1728.7,667.2 1731.9,667.7 1734.9,667.7 1737.9,667.4 1742.4,665.9 1746.6,667.0 1745.0,669.9 1745.2,672.3 1746.8,675.1 1745.6,677.1 1743.3,680.7 1746.5,681.4 1748.2,683.9 1754.3,685.0 1757.8,685.9 1761.0,687.1 1762.1,690.5 1766.0,692.1 1771.4,693.8 1775.3,695.9 1778.5,693.4 1778.6,688.4 1781.7,685.9 1784.5,685.0 1787.9,685.6 1789.5,686.3 1792.7,688.4 1796.2,690.5 1804.2,691.5 1808.7,692.8 1810.3,693.6 1813.7,692.1 1815.4,691.1 1817.6,690.5 1820.4,690.9 1822.2,691.9 1823.1,697.3 1822.4,698.7 1823.4,701.6 1825.2,704.8 1827.7,708.4 1828.1,710.2 1829.3,712.8 1831.4,717.0 1833.6,721.2 1833.6,724.9 1837.7,728.0 1838.9,731.8 1839.8,734.1 1839.6,737.9 1840.2,739.8 1842.5,742.8 1844.2,743.9 1846.0,748.4 1847.6,752.8 1848.9,754.7 1850.6,755.4 1853.8,756.9 1856.7,759.8 1859.4,762.4 1860.6,763.5 1861.3,764.4 1861.3,766.2 1859.2,767.7 1860.8,767.5 1862.0,768.4 1867.4,771.6 1872.0,770.6 1876.2,769.1 1881.2,768.7 1885.8,767.7 1888.0,766.2 1889.7,766.6 1890.1,771.6 1888.3,775.1 1886.6,779.4 1884.4,782.3 1881.9,786.6 1880.0,789.9 1877.7,793.3 1872.7,798.0 1868.6,801.7 1863.8,805.1 1858.6,810.2 1855.3,814.9 1852.8,817.2 1850.3,818.6 1849.9,820.4 1848.5,823.4 1846.7,825.7 1846.4,827.0 1845.3,830.4 1847.1,833.2 1847.8,836.8 1847.1,839.3 1847.8,841.0 1848.5,844.7 1850.3,845.8 1851.2,846.5 1851.7,850.2 1851.5,855.6 1851.7,860.0 1852.2,863.1 1849.9,867.4 1846.4,870.0 1842.5,871.5 1838.6,874.1 1836.4,877.1 1833.6,879.7 1831.3,881.0 1830.7,883.5 1832.2,886.5 1833.2,889.6 1833.8,893.1 1833.6,896.4 1832.9,898.5 1830.0,900.1 1826.5,901.6 1823.3,904.6 1824.3,906.0 1824.3,908.2 1823.3,912.8 1821.5,916.0 1817.8,920.3 1815.4,924.2 1812.4,927.5 1806.6,933.4 1803.4,935.5 1798.6,937.5 1795.7,938.5 1790.6,937.9 1786.1,938.5 1782.0,939.4 1778.5,941.3 1776.0,940.3 1774.4,939.2 1773.0,939.2 1772.8,937.3 1771.0,933.4 1772.2,929.2 1772.4,927.5 1769.9,923.4 1768.0,919.5 1767.3,917.8 1765.8,915.2 1763.2,912.0 1761.2,907.4 1760.3,902.8 1758.9,898.1 1758.7,894.2 1758.9,891.7 1757.1,887.7 1755.0,884.3 1752.5,879.7 1750.0,875.2 1749.1,871.3 1749.3,868.5 1750.6,863.7 1751.8,859.3 1753.2,855.6 1755.0,854.0 1756.4,849.4 1756.4,847.3 1754.6,843.7 1754.3,840.4 1755.0,837.5 1753.2,835.0 1751.1,830.7 1750.7,828.8 1749.5,826.1 1746.8,823.1 1745.2,821.1 1742.2,817.9 1740.4,815.4 1738.3,811.3 1740.4,810.1 1741.0,807.6 1741.5,805.4 1742.0,802.4 1742.2,800.8 1742.6,798.5 1741.8,794.8 1740.1,794.8 1739.0,794.4 1737.9,793.0 1736.9,792.8 1734.0,793.2 1732.2,793.3 1729.0,793.7 1726.9,791.2 1725.1,788.3 1723.4,786.6 1719.4,786.0 1715.9,786.4 1711.6,787.3 1710.7,788.3 1706.6,789.2 1703.8,790.5 1699.9,792.1 1696.3,790.8 1693.1,790.3 1689.6,790.7 1685.7,791.4 1682.5,792.6 1680.0,793.4 1677.8,792.3 1675.2,791.2 1671.6,788.0 1668.9,786.6 1666.8,784.4 1662.9,782.3 1661.3,780.8 1660.2,778.7 1660.1,776.5 1658.6,775.1 1656.5,772.5 1654.7,770.4 1653.7,769.3 1651.9,766.6 1649.0,765.3 1647.8,764.7 1648.3,760.7 1647.8,759.1 1645.0,756.0 1646.5,755.4 1647.6,752.8 1648.7,751.4 1648.7,748.8 1650.5,743.5 1649.7,740.2 1648.7,738.7 1649.4,735.6 1649.7,733.7 1646.7,733.4 1646.9,731.1 1647.3,728.0 1649.4,724.5 1650.6,722.2 1652.6,719.1 1655.8,712.7 1658.6,710.8 1659.7,708.6 1661.5,705.4 1664.7,704.8 1667.9,702.4 1671.1,699.6 1673.0,695.4 1672.1,694.4 1672.5,690.9 1674.5,687.5 1677.1,683.5 1680.3,682.0 1683.0,680.1 1684.9,676.9 1685.5,675.1Z M1882.5,851.8 1884.8,856.7 1886.2,862.6 1886.9,863.9 1885.8,866.6 1884.4,864.8 1884.1,867.4 1883.0,870.7 1883.0,874.6 1880.9,881.6 1879.1,886.5 1877.3,892.3 1875.2,898.1 1874.5,901.0 1867.9,903.2 1863.8,900.9 1862.6,895.4 1861.1,890.0 1862.0,886.5 1863.8,882.7 1865.2,877.8 1863.8,873.3 1864.0,871.1 1865.4,867.4 1868.4,866.6 1872.0,865.5 1874.8,863.0 1877.7,860.4 1878.0,857.8 1880.9,854.9 1881.2,853.1Z M1675.3,667.2 1676.1,663.2 1675.7,660.7 1673.6,659.1 1673.9,656.6 1675.7,652.7 1676.4,648.2 1675.9,644.6 1674.3,639.8 1677.5,637.4 1680.0,635.4 1687.1,636.6 1693.8,636.9 1696.7,637.6 1700.9,637.6 1702.0,636.9 1703.1,631.2 1703.4,626.7 1703.1,623.6 1700.9,621.8 1699.5,618.2 1697.4,616.6 1691.7,615.0 1690.5,612.1 1693.1,610.2 1696.7,609.7 1697.7,611.0 1700.2,610.5 1702.0,610.5 1701.7,609.4 1700.4,604.8 1702.9,604.8 1703.4,606.7 1706.3,606.9 1707.7,605.9 1708.1,604.8 1711.3,603.4 1712.9,602.0 1713.0,598.9 1713.9,597.8 1715.9,597.2 1717.7,596.1 1720.2,595.0 1721.9,591.8 1724.2,586.3 1726.6,584.8 1729.4,583.3 1732.6,583.9 1733.0,581.8 1736.2,582.4 1737.6,582.7 1738.3,580.6 1739.4,580.6 1738.8,579.1 1737.9,577.9 1738.1,574.5 1736.9,570.7 1736.2,567.6 1736.3,563.1 1737.9,560.5 1742.7,557.2 1745.0,556.2 1744.9,558.2 1744.0,561.5 1746.3,565.0 1743.8,566.6 1742.0,570.4 1741.5,573.9 1741.0,575.1 1743.4,577.9 1746.8,577.6 1746.1,580.3 1748.1,580.6 1750.4,579.1 1751.8,577.2 1755.0,576.0 1756.1,578.2 1758.0,580.6 1762.6,578.8 1767.3,576.3 1769.8,575.4 1772.8,575.1 1773.7,577.9 1776.3,577.9 1778.1,576.0 1778.3,574.2 1782.4,569.5 1782.0,564.4 1782.2,561.1 1784.0,558.5 1787.7,556.2 1789.8,560.5 1792.0,561.5 1793.0,560.8 1794.1,557.9 1794.5,552.2 1790.9,550.5 1790.9,546.3 1795.4,544.6 1799.8,543.5 1806.9,544.6 1808.7,542.1 1814.7,541.4 1810.5,539.3 1809.4,535.7 1803.2,537.5 1796.1,539.6 1789.0,542.1 1786.3,537.8 1783.4,535.0 1783.8,529.8 1783.1,523.8 1783.8,517.6 1788.1,512.8 1794.3,504.6 1797.7,502.1 1794.6,495.7 1793.2,495.3 1786.3,497.4 1783.8,499.6 1782.7,504.6 1779.9,512.4 1774.2,516.4 1771.4,521.4 1769.2,523.4 1768.5,528.3 1768.5,535.7 1772.1,537.8 1774.6,541.4 1773.1,545.6 1771.2,548.4 1767.4,550.5 1766.7,556.2 1765.7,563.4 1764.2,566.6 1762.8,566.6 1759.6,566.9 1758.4,570.4 1756.4,571.4 1754.1,571.7 1753.4,570.1 1752.5,567.3 1751.6,565.7 1753.0,563.4 1750.7,560.5 1749.7,556.5 1747.5,552.5 1747.0,548.1 1746.3,546.7 1745.4,541.4 1744.3,545.6 1743.1,547.7 1740.8,549.1 1738.6,551.5 1735.8,553.8 1732.4,554.5 1728.7,551.8 1727.3,548.1 1725.8,544.9 1725.8,540.7 1725.0,536.4 1724.8,533.1 1725.1,529.0 1725.5,524.5 1728.7,522.2 1734.7,517.6 1738.3,514.4 1741.5,512.8 1742.9,509.6 1746.5,503.8 1750.7,497.9 1752.2,492.7 1753.6,486.4 1758.6,481.9 1760.7,476.3 1753.6,476.3 1758.9,471.5 1760.7,466.6 1764.6,462.6 1767.8,460.6 1774.6,458.6 1776.7,453.4 1783.8,452.3 1791.6,448.6 1799.1,443.2 1803.4,444.3 1805.8,443.7 1808.7,445.9 1810.8,446.4 1817.9,451.8 1814.0,454.9 1810.5,454.4 1814.2,458.0 1816.9,457.5 1819.4,459.1 1821.1,456.0 1824.7,458.0 1826.5,461.1 1831.8,463.6 1837.1,466.6 1842.5,472.5 1848.9,474.8 1853.1,481.9 1854.2,486.4 1851.4,490.0 1846.0,492.7 1844.2,493.1 1837.1,490.9 1831.8,489.6 1829.3,487.3 1822.6,483.2 1824.7,489.1 1828.2,495.3 1831.1,502.5 1831.4,507.1 1837.1,511.2 1841.8,511.2 1842.8,511.2 1838.9,507.1 1837.1,502.1 1838.2,500.4 1844.2,502.9 1848.5,505.4 1851.4,505.9 1849.6,498.7 1850.6,494.4 1854.9,492.7 1857.4,489.1 1862.0,492.7 1864.5,493.5 1865.6,486.4 1863.1,482.8 1863.8,480.0 1863.1,472.5 1861.3,469.1 1867.4,470.5 1870.9,475.3 1873.0,477.2 1872.7,485.5 1877.3,482.8 1877.3,479.1 1880.2,478.1 1880.2,474.4 1885.1,474.4 1892.2,470.5 1897.6,472.5 1899.4,473.4 1906.5,469.5 1920.7,468.6 1920.7,711.2 1907.5,708.8 1901.1,710.8 1895.8,709.6 1894.0,707.2 1888.2,701.4 1885.5,697.1 1881.6,695.7 1880.2,697.3 1878.0,697.3 1877.3,699.6 1878.0,699.8 1879.4,703.2 1880.9,706.4 1883.9,709.2 1885.7,711.4 1885.7,714.4 1887.3,717.1 1888.0,718.1 1887.8,715.2 1889.4,712.6 1890.8,716.0 1890.8,718.7 1889.8,719.9 1890.8,720.7 1894.4,720.3 1897.9,720.7 1900.8,719.3 1904.0,716.2 1906.5,713.6 1907.9,711.8 1907.9,717.1 1909.1,719.7 1915.7,722.6 1920.0,726.9 1916.4,734.5 1912.9,740.2 1908.2,743.9 1904.0,745.8 1899.7,747.6 1896.2,748.9 1893.1,752.6 1888.7,754.3 1885.8,755.6 1882.1,756.9 1878.0,758.7 1873.4,760.9 1869.1,762.4 1867.4,763.1 1863.8,763.8 1861.8,763.7 1861.1,761.3 1860.1,755.8 1859.2,752.5 1859.5,749.9 1858.6,748.0 1856.0,743.9 1853.5,739.8 1849.6,735.3 1846.6,730.7 1845.8,727.2 1846.0,725.7 1842.6,720.7 1839.6,717.1 1837.0,712.2 1834.3,708.0 1831.8,705.2 1830.4,705.2 1831.1,702.8 1831.8,699.1 1830.7,701.6 1830.0,703.6 1829.1,706.2 1826.8,704.0 1825.4,701.6 1823.6,698.7 1823.1,697.3 1822.2,691.9 1824.7,692.6 1827.5,692.3 1829.3,691.3 1830.9,688.6 1831.8,685.4 1832.5,683.5 1833.6,680.7 1834.6,678.4 1835.0,676.4 1834.5,673.6 1835.2,671.2 1836.1,669.0 1835.4,667.7 1833.0,669.2 1830.4,668.1 1828.2,670.3 1824.0,671.4 1821.1,669.2 1816.5,667.9 1815.8,670.3 1814.6,670.3 1812.8,670.8 1810.8,669.0 1807.8,667.9 1805.8,668.5 1804.8,667.2 1804.2,663.4 1800.9,661.4 1803.0,660.7 1802.6,658.6 1802.3,656.8 1800.0,655.9 1800.5,653.6 1801.2,652.9 1804.4,651.7 1806.7,652.0 1810.1,652.0 1813.7,650.1 1810.6,648.9 1811.0,648.0 1812.6,648.0 1819.0,647.5 1820.4,646.8 1824.7,644.2 1827.4,644.3 1832.3,643.9 1835.4,645.4 1836.6,647.5 1838.9,648.0 1843.9,649.4 1848.7,648.9 1851.4,648.7 1855.4,645.8 1855.4,643.4 1853.1,639.3 1848.5,636.4 1846.2,633.9 1841.8,631.0 1840.0,629.9 1837.5,628.4 1840.3,627.9 1842.1,624.4 1843.0,624.1 1843.5,620.8 1847.1,618.7 1845.7,618.2 1840.9,618.9 1838.2,620.5 1833.2,622.3 1831.1,623.6 1831.8,625.9 1837.1,627.7 1836.8,629.2 1833.2,629.2 1829.7,631.9 1827.4,632.4 1826.5,631.5 1825.9,628.4 1822.9,627.7 1824.7,625.4 1826.8,623.9 1822.9,623.9 1820.4,622.8 1822.2,621.8 1819.5,621.3 1816.7,621.8 1815.8,623.9 1813.0,627.9 1812.6,630.5 1809.2,633.4 1809.0,636.9 1806.7,638.4 1805.1,641.8 1806.9,644.6 1810.5,647.7 1810.3,648.9 1805.1,649.0 1802.3,651.7 1800.5,653.3 1802.6,650.8 1800.0,650.3 1799.4,649.6 1794.1,649.2 1792.0,650.3 1794.1,652.9 1792.3,652.0 1792.7,653.8 1790.6,652.4 1791.8,653.8 1790.4,652.7 1788.8,650.8 1787.7,651.7 1787.7,653.6 1788.8,655.4 1790.4,657.5 1789.0,656.6 1789.1,658.6 1788.4,658.9 1790.2,660.0 1792.7,661.8 1792.9,664.3 1791.3,663.0 1789.1,663.2 1790.9,665.4 1788.4,664.8 1789.1,667.7 1789.8,669.7 1787.7,668.1 1787.4,669.9 1785.9,667.2 1784.5,668.1 1784.0,666.3 1783.1,664.3 1782.6,663.0 1784.5,661.6 1787.4,662.3 1788.8,662.7 1787.0,661.1 1784.9,661.1 1783.4,661.1 1782.4,661.4 1781.1,658.4 1779.4,655.9 1778.5,654.3 1776.0,652.0 1776.5,647.5 1776.7,645.1 1775.3,643.7 1773.1,642.2 1771.7,641.0 1769.2,639.1 1765.8,636.9 1763.9,635.9 1761.4,633.9 1760.3,629.4 1758.6,627.7 1757.8,628.9 1756.6,630.2 1755.4,627.2 1756.2,626.2 1753.9,626.2 1751.3,627.4 1751.8,629.7 1751.1,632.2 1752.2,634.2 1755.4,636.4 1757.8,642.0 1760.7,644.2 1765.0,644.6 1763.9,646.1 1767.3,648.2 1771.2,650.5 1773.1,652.9 1772.6,654.5 1771.4,653.3 1768.5,651.5 1766.4,653.6 1766.0,654.7 1768.3,657.7 1766.2,659.1 1766.2,660.9 1764.4,663.1 1763.0,662.3 1763.7,659.8 1764.6,659.6 1764.2,656.6 1762.8,653.3 1760.5,652.0 1759.8,650.5 1758.4,650.8 1758.0,649.6 1755.5,648.0 1753.8,647.9 1752.2,646.8 1750.9,645.4 1749.3,643.7 1746.8,642.2 1744.7,639.6 1744.0,636.6 1742.4,634.2 1739.0,632.4 1737.6,632.9 1735.8,634.9 1733.1,635.9 1731.2,638.1 1728.5,638.8 1726.4,637.9 1723.7,637.6 1720.5,637.4 1718.4,638.8 1718.2,640.8 1719.1,642.7 1718.6,644.9 1715.2,647.0 1711.8,648.4 1710.4,650.3 1707.2,653.8 1706.3,656.1 1708.1,659.3 1705.6,661.1 1704.9,664.4 1703.8,664.5 1701.7,665.4 1699.5,668.5 1698.6,668.0 1694.9,668.5 1691.7,668.5 1689.9,669.4 1688.3,671.1 1687.4,671.6 1684.9,669.4 1684.6,668.1 1682.6,666.3 1679.3,667.2Z M1687.1,602.8 1689.4,600.9 1691.3,597.5 1692.8,596.4 1694.9,596.4 1697.7,594.7 1696.0,595.0 1693.3,594.1 1688.5,592.4 1690.6,591.2 1692.8,589.5 1692.8,587.1 1690.5,587.1 1692.1,585.1 1690.8,584.2 1692.1,583.6 1693.8,584.0 1696.5,583.3 1696.5,581.2 1697.2,579.4 1695.8,579.4 1694.5,576.9 1696.3,574.2 1694.5,574.8 1691.7,575.7 1690.1,576.0 1689.0,573.9 1690.8,571.1 1689.9,567.9 1688.1,568.2 1686.9,572.0 1687.1,569.5 1687.4,566.9 1687.8,565.0 1685.3,562.9 1686.5,561.1 1687.1,559.2 1683.9,558.5 1684.9,556.5 1686.7,557.2 1688.9,555.2 1688.1,552.8 1689.6,550.3 1694.9,550.5 1696.5,550.1 1696.3,551.5 1694.4,553.8 1693.1,555.5 1692.4,557.9 1695.6,556.4 1700.2,556.5 1701.0,557.9 1700.1,560.2 1698.6,563.1 1697.0,564.7 1698.1,565.8 1696.0,567.7 1698.5,567.6 1700.2,569.0 1701.7,570.7 1702.4,573.9 1703.1,575.7 1705.2,576.9 1707.0,579.3 1707.7,582.4 1706.3,581.8 1708.6,585.1 1708.1,586.6 1709.1,586.3 1712.0,586.4 1713.6,588.3 1713.6,589.0 1712.2,592.1 1711.4,593.0 1709.8,594.5 1710.0,595.0 1712.3,595.3 1712.2,596.8 1710.8,598.0 1709.5,598.4 1708.2,599.0 1706.8,598.5 1704.5,599.0 1703.4,598.6 1701.7,599.2 1700.6,599.2 1698.6,600.2 1696.9,599.1 1695.3,599.8 1694.4,601.9 1692.6,601.2 1690.3,601.7 1688.9,603.3 1687.6,602.5Z M1681.1,571.5 1682.8,572.9 1685.5,572.5 1686.7,574.8 1687.1,576.0 1688.0,577.6 1685.7,580.0 1684.9,580.3 1685.3,581.7 1685.7,583.9 1686.0,586.1 1684.8,590.8 1682.7,591.1 1678.2,593.0 1677.1,594.1 1672.4,595.0 1671.1,594.1 1670.4,592.4 1670.2,591.2 1672.1,590.2 1672.1,589.4 1672.0,588.5 1673.6,586.6 1675.3,585.1 1675.3,584.4 1671.1,583.6 1671.1,580.2 1671.8,578.2 1674.6,578.2 1676.8,578.2 1678.2,576.3 1676.1,575.7 1677.8,572.9 1679.1,572.5 1680.3,572.1Z M1751.6,663.6 1754.6,661.8 1762.8,661.6 1761.0,665.9 1761.0,668.8 1758.2,667.2 1753.2,664.8Z M1736.5,649.4 1740.1,647.7 1742.2,651.3 1741.5,657.3 1739.0,658.6 1737.2,656.8 1737.2,652.2Z M1737.9,642.2 1740.8,639.3 1741.3,643.7 1740.1,647.0 1738.3,645.1Z M1791.1,673.6 1793.4,673.4 1799.1,674.7 1800.9,675.1 1798.0,676.2 1795.2,676.2 1791.3,674.9Z M1822.2,675.8 1824.7,674.5 1830.2,673.0 1828.1,676.0 1824.7,677.7 1822.7,677.1Z M1715.7,655.4 1718.4,653.8 1719.6,655.0 1718.0,656.8Z M1789.8,658.9 1793.0,660.0 1794.6,662.7 1793.0,662.1 1790.9,660.5Z M1806.0,671.0 1807.6,669.7 1807.3,671.6Z M1799.4,657.3 1801.6,656.6 1801.8,658.2Z M1771.9,560.8 1774.2,555.2 1775.3,556.2 1773.8,559.8Z M1765.7,566.3 1768.0,558.8 1766.4,564.4Z M1746.8,569.5 1752.2,566.9 1752.2,570.1 1751.1,572.6 1749.3,574.2 1747.2,572.6Z M1742.2,570.7 1745.4,570.7 1745.8,573.5 1743.3,573.5Z M1785.0,552.5 1785.9,551.1 1789.8,550.5 1789.1,552.5 1786.3,554.5Z M1785.9,548.4 1788.1,547.0 1789.1,548.7 1787.4,549.8Z M1681.0,525.3 1683.9,523.4 1683.5,526.8Z M1701.7,541.4 1703.8,535.7 1703.1,540.7Z M1695.6,547.7 1697.7,546.3 1697.4,548.7Z M1682.5,555.9 1685.3,551.1 1684.6,554.5 1681.7,561.1 1680.7,559.2Z M1382.2,276.7 1386.7,272.8 1394.4,266.3 1398.9,269.4 1400.6,267.8 1405.0,269.4 1401.1,263.9 1405.6,258.1 1409.4,260.0 1413.6,267.0 1414.4,263.3 1425.0,271.4 1414.7,257.8 1418.9,253.3 1420.2,248.9 1426.4,250.8 1424.2,246.7 1424.4,243.7 1430.6,244.8 1437.2,254.4 1438.9,252.6 1435.0,241.1 1442.0,241.1 1448.7,249.2 1446.9,243.9 1449.4,238.9 1451.1,238.9 1454.4,242.8 1455.6,239.2 1458.0,238.9 1460.0,241.1 1464.4,243.0 1470.6,243.9 1463.3,251.1 1463.9,251.9 1471.1,249.2 1473.3,246.3 1476.1,245.9 1479.4,247.2 1482.8,252.2 1481.9,256.7 1485.0,254.8 1487.8,255.6 1487.8,263.3 1478.3,274.1 1469.4,276.7 1469.1,279.4 1463.3,284.4 1465.0,286.7 1473.3,280.9 1476.7,281.7 1465.6,294.4 1460.0,305.0 1456.1,301.7 1455.0,302.8 1456.7,307.2 1453.3,310.8 1450.9,311.1 1454.4,313.3 1453.3,316.1 1450.6,318.9 1442.2,315.9 1443.3,318.9 1445.6,319.7 1446.1,322.8 1433.3,323.3 1435.3,325.6 1435.8,328.3 1441.1,331.1 1440.9,331.9 1426.9,330.8 1429.8,334.4 1435.6,333.3 1441.1,337.8 1439.8,341.7 1435.6,342.2 1438.9,345.6 1436.7,350.6 1429.1,352.2 1429.1,359.7 1427.2,361.7 1421.1,361.7 1417.8,358.1 1416.7,358.6 1417.4,361.1 1415.0,363.3 1415.6,364.4 1422.8,365.9 1425.6,367.2 1427.8,370.3 1427.8,373.3 1420.2,378.6 1418.9,374.4 1416.7,373.9 1414.4,370.8 1413.1,371.1 1413.9,375.2 1408.9,375.2 1408.3,372.2 1406.9,372.2 1406.4,377.2 1405.0,377.8 1400.6,374.1 1398.3,375.6 1397.2,373.3 1395.6,372.8 1394.4,375.6 1393.3,371.1 1391.7,370.8 1391.3,374.1 1389.8,373.9 1389.4,370.3 1393.9,366.1 1399.1,365.0 1394.8,356.1 1397.8,353.9 1404.2,361.7 1410.6,361.7 1414.4,351.7 1413.6,351.1 1409.4,358.0 1405.2,357.8 1404.1,352.2 1407.8,346.1 1406.1,345.6 1406.7,341.7 1405.3,341.1 1403.1,346.7 1402.2,345.0 1398.9,347.8 1396.7,346.7 1399.4,337.8 1404.4,336.1 1411.1,338.1 1416.7,335.0 1410.6,332.8 1405.2,321.1 1400.6,316.1 1400.6,309.7 1408.3,309.7 1416.7,320.3 1421.7,321.4 1422.8,319.7 1418.9,318.1 1413.3,307.8 1434.1,295.6 1433.9,294.8 1428.7,293.0 1431.1,286.3 1434.2,283.9 1433.9,283.0 1427.8,285.6 1419.4,299.2 1414.2,301.7 1413.9,297.0 1404.4,301.7 1400.6,300.6 1403.3,294.4 1411.3,290.6 1411.3,289.4 1402.2,290.6 1395.6,299.2 1391.1,295.2 1392.8,293.3 1398.9,292.8 1405.3,285.9 1403.9,284.8 1397.8,289.2 1389.1,290.3 1389.1,285.9 1392.8,281.1 1396.7,279.7 1393.3,278.3 1385.8,281.7 1387.8,277.2 1385.3,276.1 1383.1,277.8Z M1373.3,285.6 1380.2,289.2 1383.9,301.7 1388.9,304.1 1389.1,308.9 1392.8,311.9 1393.3,307.2 1395.3,307.2 1394.4,311.7 1398.0,316.7 1396.7,322.8 1400.0,322.2 1404.1,327.0 1403.7,329.4 1396.1,335.0 1395.3,332.2 1393.3,333.3 1393.1,339.4 1392.2,340.0 1391.1,345.0 1387.2,341.1 1385.6,344.4 1384.4,347.2 1378.3,344.4 1382.2,341.1 1376.7,338.9 1376.7,335.6 1373.9,333.3 1383.1,325.9 1376.7,324.2 1373.9,326.1 1372.8,324.4 1370.0,326.1 1368.3,322.8 1371.7,319.4 1368.9,320.0 1364.2,313.9 1364.4,312.2 1371.7,313.0 1373.1,309.7 1369.4,310.6 1365.3,307.4 1368.0,307.0 1367.2,300.3 1373.9,302.8 1368.3,295.2 1370.6,291.7 1377.2,290.0 1376.7,287.2Z M1364.4,367.2 1375.0,370.6 1374.4,375.6 1383.3,373.3 1386.1,377.2 1381.7,378.3 1388.9,386.1 1387.8,388.9 1392.2,390.6 1392.8,389.4 1396.7,389.4 1402.8,391.9 1403.1,389.7 1410.0,385.9 1420.6,388.3 1424.2,392.2 1420.2,395.9 1422.2,397.4 1420.0,398.6 1421.1,401.7 1415.6,402.8 1411.7,398.1 1410.6,398.6 1410.0,401.1 1407.2,402.8 1393.1,402.8 1392.8,398.3 1388.9,400.0 1388.7,401.7 1385.8,401.7 1385.3,399.4 1381.7,400.0 1379.1,393.3 1380.6,386.1 1376.7,377.2 1370.0,377.8 1364.4,372.2 1365.6,370.6Z M1360.6,337.2 1363.9,341.1 1368.9,344.4 1368.3,350.6 1362.8,352.6 1358.0,343.3 1358.9,338.3Z M1366.7,356.7 1375.3,356.1 1374.4,358.9 1366.4,358.6Z M1367.2,390.0 1371.7,389.4 1373.9,396.1 1373.6,400.6 1371.1,401.7 1364.7,395.9Z M1343.3,424.4 1347.8,427.2 1351.7,424.2 1350.9,420.0 1347.8,417.2 1350.6,415.6 1350.0,412.2 1353.3,412.0 1355.0,414.2 1358.3,411.7 1361.1,413.9 1360.0,417.8 1357.2,422.8 1360.0,423.3 1363.9,427.2 1362.8,435.6 1360.0,437.8 1357.2,437.2 1356.4,440.9 1353.9,438.9 1350.0,431.7 1345.0,429.1Z M1368.3,415.6 1371.7,413.3 1370.0,411.1 1374.4,408.7 1383.3,410.6 1385.0,412.8 1381.1,423.9 1372.2,425.3 1373.9,427.8 1373.3,432.2 1370.6,433.9 1368.3,425.0Z M1333.3,328.3 1338.3,327.2 1340.0,329.4 1343.1,335.6 1345.6,333.1 1347.2,334.4 1346.7,336.7 1351.7,339.1 1353.9,352.8 1352.2,353.9 1345.3,346.1 1335.3,343.9 1339.4,342.8 1340.6,337.2 1338.3,336.7 1337.8,333.3 1335.0,332.8 1333.1,330.6Z M1306.7,343.9 1313.6,338.7 1316.7,340.6 1316.4,344.7 1312.2,342.2 1309.4,345.0Z M1305.6,354.4 1315.6,350.0 1313.3,354.4 1315.0,358.3 1310.0,361.3 1305.8,357.8Z M1299.8,351.7 1301.3,352.2 1302.0,354.7 1300.6,353.9Z M1272.2,380.0 1285.3,363.3 1292.8,363.3 1293.3,361.1 1295.8,362.2 1293.9,363.9 1294.4,367.8 1292.8,368.9 1293.6,371.7 1289.4,377.2 1288.3,370.0 1285.6,372.8 1284.7,378.9 1282.8,378.3 1280.6,383.3 1277.2,380.0 1275.0,382.2 1272.8,382.2Z M1291.1,393.3 1292.2,391.1 1298.9,388.9 1292.0,387.2 1298.9,385.0 1293.9,382.2 1298.9,380.6 1297.2,377.2 1298.9,376.1 1302.2,380.0 1304.4,379.4 1308.3,383.9 1307.8,385.6 1310.6,386.1 1312.2,389.4 1320.0,390.9 1320.6,387.2 1317.8,384.4 1318.9,382.2 1316.4,378.3 1318.9,372.8 1320.0,372.2 1322.8,383.9 1323.9,387.2 1325.6,385.6 1327.2,388.0 1329.1,383.9 1331.7,384.4 1329.4,395.0 1321.1,395.6 1307.2,404.2 1304.2,403.9 1302.2,400.2 1310.6,396.7 1312.8,395.0 1310.6,393.6 1303.3,397.2 1304.2,392.0 1298.9,396.7 1291.7,393.6Z M1330.9,356.7 1332.2,357.2 1334.7,363.3 1333.3,363.1Z M1341.1,378.9 1343.3,383.6 1340.0,382.2 1338.1,380.6Z M1336.1,392.2 1337.8,392.2 1337.6,395.6 1336.0,395.3Z M1344.4,388.3 1353.3,386.4 1346.1,377.2 1347.8,377.8 1350.6,382.2 1353.3,382.2 1350.6,375.6 1352.8,375.0 1355.0,380.6 1356.7,374.4 1358.9,375.6 1360.2,388.3 1359.4,393.3 1356.1,396.4 1352.2,396.7 1350.6,391.7Z M1265.0,406.7 1274.4,404.7 1281.1,409.4 1287.8,407.2 1291.1,408.9 1296.1,416.1 1283.3,426.7 1279.1,432.4 1276.7,440.6 1270.0,443.9 1266.7,438.3 1263.3,434.7 1261.1,433.9 1263.3,426.7 1265.3,423.9 1264.2,420.6 1268.0,413.9Z M1285.6,436.1 1288.3,427.6 1299.4,420.0 1301.7,423.6 1299.4,427.8 1302.8,427.8 1306.7,423.3 1311.1,426.4 1308.9,431.7 1316.7,425.6 1315.0,423.9 1320.6,428.3 1323.3,439.1 1326.9,436.1 1323.3,421.1 1326.1,419.8 1331.7,423.9 1336.9,448.9 1347.8,454.7 1347.8,457.8 1346.1,456.9 1343.3,457.2 1342.2,460.6 1339.4,460.0 1341.1,464.2 1343.9,462.8 1343.1,466.7 1333.6,466.7 1327.6,461.7 1325.8,465.8 1318.7,469.1 1306.7,470.2 1302.8,463.1 1295.0,462.8 1292.0,457.8 1293.3,455.6 1310.0,454.2 1308.9,451.1 1302.2,448.0 1291.7,449.1 1287.2,446.1 1292.2,442.2 1297.8,441.7 1294.4,439.1 1289.8,440.6 1288.9,438.9Z M1328.7,416.1 1332.2,414.4 1335.3,416.7 1333.3,421.7Z M1322.0,471.7 1322.8,470.0 1329.8,468.0 1330.2,469.4 1324.7,474.2Z M1355.3,466.4 1358.3,463.3 1359.4,459.4 1365.6,465.6 1366.7,468.0 1363.3,471.3Z M1405.0,420.8 1412.5,415.3 1417.0,414.7 1421.7,425.0 1418.0,430.8 1419.7,432.5 1420.0,436.7 1422.5,433.3 1425.8,432.5 1427.0,435.8 1429.2,431.7 1430.8,433.0 1430.0,428.3 1435.0,427.0 1438.7,428.7 1440.3,432.5 1437.5,436.7 1441.7,435.0 1439.7,437.5 1440.8,443.7 1443.3,442.0 1446.7,443.0 1448.0,440.0 1451.7,439.7 1453.7,442.5 1448.3,447.0 1450.8,447.5 1453.7,445.8 1451.7,450.8 1453.7,455.0 1457.5,448.7 1461.7,448.7 1463.7,451.3 1458.3,455.8 1465.0,454.2 1467.5,457.5 1460.8,461.7 1463.3,463.0 1461.3,467.5 1465.3,467.5 1464.7,470.3 1469.2,471.3 1469.7,475.0 1474.2,476.3 1474.7,478.3 1478.7,479.2 1479.2,481.7 1477.5,483.0 1482.5,484.7 1480.8,487.5 1486.3,486.3 1488.7,488.3 1484.2,490.8 1484.2,495.8 1480.3,496.3 1480.0,501.7 1476.3,500.0 1475.0,495.8 1478.0,492.0 1475.8,494.2 1468.7,488.0 1466.7,491.7 1465.3,489.2 1463.0,492.5 1468.0,502.5 1471.3,505.0 1478.0,512.5 1475.8,520.0 1471.7,516.3 1466.7,513.3 1462.5,513.3 1471.7,525.3 1462.5,522.5 1460.0,520.0 1452.5,516.3 1453.7,514.2 1450.8,511.7 1447.0,506.7 1441.7,504.2 1440.3,506.7 1438.7,505.8 1434.2,508.7 1430.8,506.7 1430.3,503.3 1433.3,500.0 1438.0,501.7 1439.2,505.8 1446.7,499.2 1442.5,493.3 1452.0,483.3 1447.0,473.3 1445.8,471.7 1443.3,470.0 1440.8,468.0 1441.3,465.8 1435.3,469.2 1435.0,467.5 1439.2,464.2 1435.8,460.8 1432.0,454.2 1428.7,452.5 1425.8,449.2 1425.3,455.0 1418.3,454.2 1417.0,456.3 1401.7,454.7 1399.7,450.8 1395.3,453.0 1390.8,448.7 1391.3,445.8 1396.7,445.8 1395.3,443.3 1388.3,440.0 1390.8,421.7 1395.8,414.2 1403.7,413.0 1398.0,426.3 1399.2,434.2 1403.7,440.0 1398.7,445.8 1405.0,444.2 1406.7,446.7 1407.0,437.5 1403.0,435.0 1407.5,432.5 1403.0,425.8Z M1420.8,415.0 1423.7,414.2 1432.5,417.0 1435.8,422.5 1425.0,423.7 1423.0,420.0Z M1433.0,478.3 1438.0,473.3 1439.2,480.8 1433.7,483.0Z M1401.7,497.0 1404.2,496.7 1404.7,501.7 1407.5,499.7 1415.8,507.5 1417.0,511.7 1420.8,511.7 1419.2,515.0 1412.0,510.0 1405.0,516.7 1402.5,513.0 1399.7,512.5 1401.7,508.3Z M1409.2,524.2 1411.7,520.8 1414.2,520.8 1410.8,524.7Z M1423.3,525.3 1425.0,525.3 1424.2,528.3Z M1500.3,386.7 1490.0,379.7 1482.5,377.0 1479.7,379.2 1470.0,379.2 1469.2,381.3 1460.8,377.5 1462.5,374.2 1465.8,373.7 1460.0,370.8 1460.3,368.7 1457.5,369.2 1456.3,366.3 1463.0,365.8 1463.7,362.5 1470.8,363.0 1473.0,358.7 1470.0,355.8 1467.5,358.0 1459.7,358.0 1459.2,353.3 1454.2,353.0 1449.2,348.3 1449.7,345.0 1453.0,340.3 1462.5,337.0 1463.3,334.2 1467.5,331.7 1474.2,330.3 1476.7,316.7 1479.2,312.0 1470.3,311.7 1469.2,306.3 1478.0,293.3 1482.5,292.0 1483.7,295.8 1484.7,288.3 1489.2,290.8 1490.3,273.3 1492.5,270.8 1495.0,270.8 1505.8,284.2 1506.7,283.3 1497.0,268.7 1512.5,259.7 1514.7,260.8 1516.7,266.3 1517.0,275.3 1518.3,275.0 1520.3,262.0 1525.8,271.7 1530.3,271.7 1532.0,270.0 1526.7,256.7 1529.7,255.8 1540.3,265.0 1547.5,274.2 1550.3,256.3 1546.3,250.0 1560.3,249.7 1560.3,248.3 1548.7,243.3 1544.2,244.2 1544.2,240.3 1546.3,240.8 1554.7,233.7 1559.7,238.3 1563.3,232.5 1565.8,232.0 1570.8,242.0 1572.0,241.7 1573.0,235.3 1570.8,230.3 1574.2,227.0 1582.5,224.7 1586.3,225.8 1590.0,223.0 1598.3,223.0 1613.0,232.0 1600.3,235.3 1593.0,241.3 1594.2,242.0 1600.0,238.3 1610.8,239.7 1618.0,237.5 1619.2,244.2 1626.7,247.0 1630.8,253.0 1624.2,259.2 1600.0,264.7 1602.0,270.8 1608.7,267.0 1616.7,268.3 1620.8,275.8 1624.2,275.3 1625.3,268.7 1627.5,267.0 1630.3,267.0 1630.0,282.5 1623.7,296.3 1625.0,297.0 1634.2,286.7 1637.5,278.7 1644.7,283.3 1650.3,274.2 1655.8,273.3 1663.3,277.0 1666.3,281.3 1660.8,289.2 1655.8,292.0 1656.7,295.0 1652.0,299.7 1646.7,300.8 1650.0,305.0 1647.0,309.2 1637.0,308.3 1635.0,311.7 1635.3,319.2 1638.0,319.7 1639.2,330.0 1632.0,339.2 1629.2,355.0 1630.8,358.0 1633.7,353.7 1638.0,356.7 1633.3,358.0 1638.0,364.2 1641.7,364.7 1641.7,370.0 1632.5,368.0 1630.8,371.7 1627.0,370.8 1626.3,374.2 1629.2,374.7 1630.3,379.2 1636.7,381.7 1636.7,392.0 1629.2,396.3 1634.2,397.0 1637.5,405.3 1627.5,410.0 1633.7,412.5 1633.3,416.7 1628.7,418.7 1617.5,411.7 1619.7,417.5 1610.0,421.3 1619.7,419.2 1628.0,424.7 1628.0,431.7 1625.0,431.7 1619.2,423.0 1612.0,426.3 1618.3,427.5 1628.3,438.3 1630.0,442.5 1629.7,449.7 1623.3,449.2 1621.3,443.7 1615.8,439.2 1610.8,438.3 1615.3,442.0 1614.7,445.3 1606.3,445.8 1603.0,451.3 1615.8,449.2 1608.7,456.3 1616.3,453.0 1626.7,455.3 1621.7,461.7 1618.0,463.3 1613.0,469.2 1600.0,474.2 1597.5,473.3 1596.3,475.0 1593.3,471.7 1592.5,476.3 1589.2,478.3 1586.7,485.8 1582.5,490.8 1580.0,490.8 1579.7,493.3 1573.3,496.3 1575.3,490.8 1572.0,490.8 1570.8,496.3 1564.7,498.0 1564.2,501.7 1560.8,503.7 1563.7,507.5 1560.8,508.7 1563.0,513.3 1560.8,517.5 1558.0,517.5 1555.3,520.8 1556.7,529.7 1554.2,535.8 1550.8,537.0 1551.7,541.7 1548.3,537.0 1546.7,538.0 1544.2,535.8 1545.0,532.0 1538.7,535.8 1534.2,532.0 1533.7,525.8 1529.7,523.3 1530.3,520.0 1525.0,514.7 1524.7,512.0 1529.7,511.7 1530.3,508.0 1525.8,501.7 1522.5,507.5 1521.7,500.0 1525.3,496.3 1521.7,498.3 1518.0,497.0 1517.5,493.3 1525.0,487.0 1524.2,485.8 1517.0,492.0 1521.7,486.3 1516.3,485.0 1517.0,481.7 1527.5,481.7 1520.0,476.3 1518.3,478.3 1519.2,475.0 1525.0,475.8 1525.8,471.7 1518.3,471.3 1526.3,467.5 1528.0,465.0 1527.5,456.3 1521.7,455.8 1518.3,451.7 1515.0,449.2 1527.5,453.0 1525.8,446.7 1519.2,443.0 1522.5,438.7 1518.3,439.2 1516.3,429.7 1514.7,439.2 1510.3,439.2 1510.8,433.3 1513.0,429.7 1510.3,430.0 1513.0,427.0 1510.8,417.5 1508.3,415.8 1509.2,410.0 1506.3,406.3 1508.0,403.0 1499.2,391.3Z M1513.0,455.0 1518.3,455.8 1521.7,460.0 1517.5,463.0 1516.3,460.8 1513.0,459.2Z M1640.8,315.8 1643.3,313.7 1645.0,315.0 1643.0,318.7Z M1641.3,395.3 1643.0,392.0 1645.0,396.3Z M1622.0,497.0 1626.3,496.3 1624.7,494.2 1628.3,495.0 1628.8,492.5 1630.0,493.3 1629.5,498.3 1626.7,502.5 1630.0,502.5 1633.3,499.2 1634.5,500.0 1636.7,496.3 1640.3,494.2 1642.5,496.3 1649.2,490.8 1653.3,493.3 1655.8,499.2 1658.3,499.7 1658.0,503.7 1648.3,512.0 1645.3,512.0 1642.5,515.8 1639.2,515.8 1634.2,511.3 1630.0,510.3 1631.7,506.7 1628.3,507.5 1630.3,505.0 1625.8,503.7Z M1745.0,319.3 1747.4,319.8 1748.1,322.2 1749.6,319.3 1751.9,320.4 1754.8,318.0 1752.4,321.7 1754.8,324.4 1757.0,326.3 1758.5,319.8 1759.8,319.8 1764.4,334.6 1765.7,333.7 1764.1,318.0 1765.9,315.2 1770.4,318.0 1769.1,325.4 1772.2,323.0 1774.1,325.4 1772.8,327.8 1777.8,333.3 1779.6,332.8 1782.0,336.5 1777.4,338.9 1774.6,343.9 1774.1,350.0 1771.9,351.3 1771.9,357.8 1769.1,361.5 1767.2,371.7 1758.0,362.4 1760.4,356.9 1767.8,355.6 1767.8,352.2 1758.0,354.1 1757.0,352.2 1768.5,344.4 1769.1,343.3 1766.3,342.6 1766.7,340.2 1764.8,339.6 1763.5,341.5 1761.7,340.7 1763.0,337.4 1760.7,338.9 1758.5,338.3 1758.9,343.0 1753.7,346.3 1748.7,335.2 1751.9,335.2 1748.7,327.2 1747.4,328.5Z M1773.7,317.0 1775.6,311.9 1777.8,310.6 1777.8,305.9 1780.7,309.6 1783.0,309.3 1785.7,313.3 1788.1,307.4 1789.4,310.6 1795.9,308.1 1803.0,311.9 1803.3,314.8 1798.1,324.4 1794.1,325.9 1792.2,329.1 1788.9,328.1 1788.9,324.4 1781.5,325.9 1778.3,323.0 1782.0,318.9Z M1780.7,343.0 1783.3,341.5 1785.7,348.5 1790.4,349.4 1790.4,354.4 1793.7,353.7 1795.0,355.6 1788.1,362.4 1787.6,358.7 1782.0,357.8 1783.9,352.6Z M1869.1,301.3 1876.5,295.7 1878.9,297.6 1877.4,299.4 1872.8,303.1Z M1874.6,308.7 1879.6,302.6 1883.0,303.1 1883.0,296.7 1887.6,294.4 1890.4,298.5 1883.3,305.6 1880.7,305.9 1878.9,310.6Z M1894.1,306.9 1896.9,305.9 1897.8,309.3 1894.4,308.7Z M1903.3,409.6 1900.6,413.3 1899.3,418.9 1895.9,422.6 1895.0,425.4 1896.3,427.2 1895.0,430.9 1890.4,435.6 1892.2,438.9 1897.8,439.3 1898.1,445.7 1900.6,447.6 1905.2,448.5Z M1881.1,462.4 1885.2,463.7 1882.6,467.4 1879.3,467.0Z"/></g>
<path d="M1379.9,620.5 1385.6,621.3 1390.9,619.7 1393.7,618.2 1396.2,621.8 1399.8,621.8 1405.1,621.3 1406.5,621.8 1406.2,617.6 1402.3,613.9 1399.8,609.9 1393.7,609.1 1389.8,613.4 1385.6,616.1Z M1395.9,645.8 1398.7,645.4 1400.5,640.3 1400.5,634.4 1403.0,629.4 1405.1,625.9 1405.8,624.9 1403.0,624.4 1399.8,625.4 1396.9,628.4 1394.5,631.5 1395.9,634.4 1394.8,639.3Z M1406.2,624.9 1408.7,623.9 1412.2,623.6 1417.6,624.4 1421.5,626.9 1423.6,630.5 1419.7,631.5 1418.3,628.4 1416.9,633.4 1416.7,637.9 1414.2,639.3 1413.7,634.9 1411.2,634.4 1409.4,636.2 1410.8,631.5 1410.8,628.9 1408.0,626.2Z M1410.6,645.4 1414.0,647.0 1418.3,645.4 1423.6,643.0 1426.8,640.1 1424.7,640.1 1421.1,641.5 1417.6,641.3 1414.0,644.2 1411.9,643.9Z M1423.6,637.9 1426.1,638.1 1431.8,638.1 1436.1,636.6 1436.4,633.9 1432.9,634.9 1428.2,634.7 1425.0,636.2Z M1883.0,665.0 1881.2,660.9 1881.6,655.9 1883.4,651.7 1886.2,652.0 1882.6,648.0 1880.2,644.6 1876.6,639.3 1876.2,634.4 1873.8,631.5 1876.2,626.9 1881.6,622.3 1888.7,619.7 1895.8,619.7 1896.5,622.8 1895.4,627.4 1889.8,628.9 1888.7,631.9 1886.2,631.9 1889.4,638.4 1894.0,640.8 1894.4,645.6 1898.6,644.2 1901.8,648.9 1895.8,650.8 1895.1,653.6 1897.9,656.8 1899.0,665.9 1892.2,668.1 1886.2,665.4Z M1820.4,810.1 1824.0,808.3 1827.9,808.3 1828.6,810.4 1828.2,813.6 1826.1,816.8 1824.3,818.2 1821.1,817.5 1820.1,813.3Z M1811.9,821.1 1812.8,825.0 1813.3,830.0 1816.2,834.7 1817.9,839.7 1816.2,839.3 1814.0,834.7 1811.5,830.4 1811.2,825.0Z M1828.2,842.9 1830.4,846.5 1830.7,851.3 1831.4,855.6 1832.9,860.0 1831.1,860.4 1829.7,855.6 1828.6,851.3 1828.2,846.5Z" fill="#fff"/>
<path d="M1206.0,459.1 1206.0,538.6 1212.8,540.0 1218.5,547.7 1222.4,544.2 1225.6,542.1 1227.3,545.6 1233.0,551.8 1238.0,561.1 1238.7,563.7 1245.1,567.6 1244.8,573.9 1243.0,575.7 M1268.9,608.6 1369.0,608.6 1369.0,606.4 1370.3,606.9 1371.0,610.2 1376.7,610.7 1380.2,612.3 1387.3,613.4 1389.1,613.9 M1436.1,633.4 1441.7,629.4 1453.1,629.4 1455.6,627.4 1457.4,623.3 1461.3,616.9 1464.5,617.4 1466.3,618.7 1466.3,625.9 1467.7,627.9 1469.1,630.5 M1454.2,620.0 1449.6,622.8 1445.7,626.9 1441.7,629.4 M1414.2,639.3 1414.0,641.3 1411.9,643.7 M1426.5,639.8 1426.3,638.1 M1406.5,621.8 1408.3,623.1 1410.1,623.9 M1291.0,686.7 1299.5,685.9 1299.2,686.7 1312.7,691.7 1322.6,691.7 1322.6,689.6 1328.7,689.6 1334.0,694.6 1335.8,698.7 1340.4,701.2 1342.9,698.1 1346.8,698.1 1349.3,700.8 1350.7,704.0 1353.6,707.2 1354.6,711.2 1358.2,713.0 1361.9,713.4 M1379.3,756.7 1379.5,754.3 1381.3,751.2 1385.7,751.0 1382.4,746.7 1383.8,746.7 1383.8,744.7 1390.4,744.7 1390.4,744.1 1393.4,742.0 M1390.4,744.7 1390.2,751.7 1391.3,751.7 M1393.7,752.5 1390.2,757.3 1389.7,757.3 1387.0,759.6 M1389.7,757.3 1392.7,759.3 1395.2,760.9 M1396.9,762.6 1399.1,759.5 1402.3,759.3 1405.5,755.8 1411.5,755.0 M1402.6,769.3 1405.5,769.8 1409.7,770.0 M1412.6,780.3 1412.6,776.9 1413.8,774.9 M1432.3,778.1 1430.4,783.3 M1452.2,737.5 1452.4,740.9 1451.3,741.7 1452.2,743.7 M1453.7,766.6 1449.6,769.3 1447.8,775.8 1449.9,779.0 1449.9,782.6 1454.9,784.0 1458.1,784.0 1460.6,787.3 1467.5,786.9 1466.3,790.1 1466.3,793.7 1468.1,796.9 1466.1,799.0 1468.8,804.7 1469.7,804.7 M1469.7,804.7 1468.8,803.0 1464.9,802.8 1459.2,803.0 1459.0,805.1 1461.3,805.4 1460.6,806.9 1458.3,806.9 1458.3,809.7 1460.6,812.9 1458.6,823.9 M1458.6,823.9 1456.0,822.5 1458.3,818.6 1450.6,817.7 1447.1,815.4 1444.2,812.7 1439.6,809.4 M1439.6,809.4 1436.1,807.6 1432.1,807.6 1427.2,803.8 M1439.6,809.4 1438.5,814.3 1435.0,818.2 1430.7,819.7 1428.6,821.1 1427.5,825.4 1426.5,826.8 1424.3,824.8 1421.3,824.7 1422.4,822.7 1421.8,821.1 M1458.6,823.9 1448.1,827.5 1444.6,835.2 1447.8,841.1 1450.3,842.9 1450.6,844.7 1456.3,843.3 1456.3,848.4 1460.1,848.2 M1460.1,848.2 1463.1,853.8 1462.0,858.0 1462.4,860.0 1460.6,862.2 1461.3,864.1 1459.9,864.8 1462.0,867.4 1460.2,871.8 M1460.2,871.8 1457.2,875.4 M1460.2,871.8 1462.0,877.5 1464.1,879.3 1462.9,883.1 1464.9,887.3 1466.1,892.5 1468.5,892.3 M1468.5,892.3 1469.1,893.1 1468.1,896.9 1463.8,899.3 1464.5,906.8 1463.4,909.2 1459.5,914.4 1458.5,918.0 1456.7,925.4 1457.4,928.8 1458.3,934.3 1459.2,938.5 1456.7,942.9 1454.5,948.6 1454.2,955.3 1455.3,958.4 1452.8,962.6 1451.7,967.7 1452.2,974.3 1451.0,975.3 1452.4,981.1 1452.1,985.6 1453.8,988.6 1452.8,991.1 1451.7,997.8 1451.3,999.8 1449.6,1003.5 1450.3,1007.8 1446.0,1011.1 1447.4,1018.8 1450.3,1018.5 1450.3,1023.3 1451.7,1026.2 1458.6,1026.2 1464.0,1028.2 M1463.4,1030.0 1463.4,1043.5 M1468.5,892.3 1472.0,888.5 1475.5,889.6 1478.7,892.5 1480.1,889.2 1484.6,890.2 M1484.6,890.2 1486.0,883.7 1487.8,880.3 1497.2,879.0 1500.6,882.2 M1500.6,882.2 1501.7,877.8 1502.9,874.8 1499.7,871.1 1500.1,867.8 1493.5,867.6 1492.2,863.3 1493.1,857.8 1487.6,857.5 1483.3,854.3 1478.4,853.6 1475.2,850.9 1475.0,843.7 1470.5,844.4 1465.6,847.3 1460.1,848.2 M1484.6,890.2 1490.5,896.2 1498.3,900.1 1502.5,902.4 1499.0,909.8 1506.8,910.6 1509.7,910.0 1513.2,903.2 M1500.6,882.2 1501.7,889.6 1508.9,890.4 1510.4,896.9 1514.3,897.1 1513.2,903.2 M1513.2,903.2 1515.9,903.4 1516.6,905.8 1516.1,909.4 1508.9,914.4 1502.5,921.7 M1502.5,921.7 1500.4,929.2 1499.7,937.3 M1502.5,921.7 1508.2,924.2 1513.2,926.9 1517.5,931.7 1517.5,936.6 M1469.7,804.7 1474.5,806.5 1479.8,802.2 1479.1,794.4 1484.4,794.8 1491.5,790.5 M1491.5,790.5 1489.0,788.0 1489.9,785.1 1492.9,784.0 1494.7,779.4 M1491.5,790.5 1494.0,791.2 1495.4,795.1 1494.7,800.8 1497.6,804.4 1501.1,803.7 1506.5,802.2 M1504.0,787.6 1503.6,791.2 1501.1,794.8 1503.6,797.3 1506.5,802.2 M1506.5,802.2 1508.6,801.9 1513.2,800.8 M1515.3,788.3 1513.7,791.6 1515.3,796.2 1513.2,800.8 M1513.2,800.8 1519.3,801.2 1523.7,794.6 M1660.5,706.6 1676.5,706.6 M1676.5,708.0 1676.5,713.2 1664.7,713.2 1664.7,723.2 1661.1,725.7 1660.8,731.3 1647.1,731.3 1646.7,733.4 M1699.5,675.6 1700.9,678.6 1701.3,683.3 1703.1,687.1 1696.7,690.1 1694.4,693.4 1689.6,697.1 1684.2,698.7 1676.5,702.4 1676.5,708.0 M1676.5,708.0 1690.2,717.1 1711.5,732.2 1713.8,735.3 1718.7,737.2 1719.1,740.2 1722.5,739.6 M1722.5,739.6 1728.0,738.5 1733.8,733.2 1749.9,723.0 M1749.9,723.0 1748.2,719.9 1742.9,718.7 1740.8,712.8 1742.6,711.2 1741.1,704.0 1742.4,702.0 1741.1,696.3 M1741.1,696.3 1739.5,688.4 1736.9,686.7 1734.0,681.2 1736.5,677.7 1736.9,673.0 1737.9,667.7 M1741.1,696.3 1744.0,693.4 1744.0,690.1 1748.2,686.3 1748.2,683.9 M1796.8,690.3 1795.7,695.0 1796.2,700.4 1796.2,728.8 M1796.2,728.8 1796.2,736.4 1792.7,736.4 1792.7,738.3 M1792.7,738.3 1763.9,723.2 1760.6,724.9 1757.8,726.5 1749.9,723.0 M1796.2,728.8 1838.6,728.8 M1792.7,738.3 1792.7,752.5 1788.8,752.8 1787.4,758.0 1785.6,763.5 1788.7,769.9 M1760.6,724.9 1762.5,732.6 1763.9,734.9 1762.5,748.0 1755.7,756.9 1755.7,759.8 M1722.5,739.6 1722.5,748.0 1719.8,753.2 1712.0,753.9 1708.1,755.2 M1755.7,759.8 1751.8,762.0 1743.6,761.5 1738.3,762.6 1732.2,762.4 1726.9,759.3 1721.9,760.5 1720.2,767.1 M1720.2,767.1 1717.5,764.6 1715.9,765.3 1715.2,763.5 1710.7,760.9 1708.1,755.2 M1708.1,755.2 1704.9,754.9 1700.2,758.0 1697.2,758.7 1693.3,760.9 1691.7,763.7 1688.5,766.6 1687.8,771.6 M1690.2,717.1 1684.0,717.1 1688.4,750.1 1687.4,753.2 1674.3,753.2 1669.3,753.6 1666.5,752.8 1664.0,756.0 M1664.0,756.0 1661.1,753.2 1657.6,749.9 1654.0,748.9 1649.4,749.5 1648.7,751.2 M1664.0,756.0 1664.7,759.1 1666.8,762.6 1667.0,764.6 M1667.0,764.6 1663.6,764.9 1658.6,763.7 1653.3,763.5 1648.0,764.7 M1647.6,760.2 1653.7,759.5 1658.3,760.5 1658.1,761.3 1652.2,761.6 1652.2,760.3 1648.0,762.0 M1658.6,763.7 1658.6,767.1 1655.1,767.8 1654.0,769.8 M1667.0,764.6 1669.3,766.0 1674.3,764.9 1676.4,769.6 1678.9,772.5 M1660.1,776.7 1662.9,773.6 1667.5,773.3 1669.7,775.8 1670.7,778.7 M1670.7,778.7 1673.6,779.0 1675.0,783.0 1677.1,781.9 M1670.7,778.7 1669.7,781.2 1666.5,784.2 M1678.9,772.5 1679.3,775.4 1677.8,778.7 1677.1,781.9 M1677.1,781.9 1677.8,785.8 1680.7,788.3 1680.5,793.3 M1678.9,772.5 1685.3,771.5 1687.8,771.6 1690.6,774.3 1696.0,773.6 1697.7,775.1 1697.2,769.6 M1697.7,775.1 1698.5,779.7 1696.0,784.8 1697.6,790.8 1696.3,790.8 M1697.2,769.6 1706.8,769.3 1710.6,769.6 1715.9,765.3 M1706.8,769.3 1707.3,771.1 1708.8,775.1 1709.3,779.7 1709.3,784.4 1711.6,787.3 M1710.6,769.6 1710.2,773.3 1713.0,776.9 1713.2,786.7 M1720.2,767.1 1720.9,771.1 1717.1,776.7 1717.0,786.2 M1737.8,792.6 1740.4,786.6 1746.8,785.8 1749.3,784.0 1752.9,777.9 1756.1,770.0 1759.3,767.8 1757.5,764.6 1757.5,762.1 1755.7,759.8 M1757.5,762.1 1760.3,764.6 1761.0,769.6 1762.5,773.3 1757.8,773.3 1757.0,774.5 1762.5,782.1 M1762.5,782.1 1767.8,781.7 1773.5,780.3 1775.3,776.9 1779.9,776.5 1784.5,771.1 1788.7,769.9 M1788.7,769.9 1791.6,773.6 1790.9,777.2 1793.4,777.9 M1793.4,777.9 1795.5,774.0 1801.6,775.1 1806.6,774.7 1806.9,775.6 1810.5,774.3 1812.2,772.9 1816.9,774.2 1818.6,774.0 1822.6,767.1 1822.4,766.0 1825.4,765.3 1825.0,770.7 1827.9,775.1 M1793.4,777.9 1797.0,782.3 1801.2,785.5 1804.8,790.8 M1804.8,790.8 1808.3,793.7 1812.2,793.0 1817.0,796.5 1820.8,796.2 1824.3,795.5 1828.2,794.1 1832.9,792.6 1835.2,792.6 M1835.2,792.6 1834.6,790.1 1830.7,785.1 1827.2,779.0 1827.9,775.1 M1827.9,775.1 1829.3,771.1 1832.2,766.7 1835.7,763.5 1837.0,757.8 M1837.0,757.8 1838.9,754.7 1838.9,747.6 1844.6,743.9 M1837.0,757.8 1842.1,755.4 1846.0,756.5 1852.8,758.4 1858.1,764.2 1860.6,763.5 M1858.1,764.2 1855.8,767.8 1856.0,769.6 1860.1,769.7 1861.1,767.9 M1860.1,769.7 1859.5,772.2 1863.8,776.9 1874.5,780.5 1878.0,780.5 1867.4,791.2 1860.2,792.3 1856.3,794.9 M1835.2,792.6 1838.6,793.2 1842.8,796.2 1847.8,796.7 1853.1,794.9 1856.3,794.9 M1856.3,794.9 1853.1,799.0 1853.1,812.0 1855.1,814.9 M1828.2,794.1 1829.8,796.5 1831.8,802.2 1828.6,807.6 1827.9,812.6 M1827.9,812.6 1841.0,819.7 1841.4,821.5 1846.7,825.7 M1817.0,796.5 1818.6,801.4 1814.0,806.0 1812.6,814.0 M1812.6,814.0 1815.8,812.7 1827.9,812.6 M1812.6,814.0 1810.5,818.6 1811.9,819.0 1815.8,817.5 1817.0,817.2 1815.8,812.7 M1810.5,818.6 1811.7,824.8 1815.1,822.5 1816.9,820.7 1815.8,817.5 M1816.7,838.3 1824.5,842.6 1828.2,842.9 M1831.6,850.3 1840.7,850.9 1844.2,849.8 1851.2,846.5 M1824.5,842.6 1825.8,847.6 1825.4,854.2 1823.6,857.8 1825.4,859.3 1830.0,861.1 1830.2,864.1 1832.9,870.7 1834.8,866.6 1834.6,861.5 1831.4,857.5 1830.4,852.0 1831.6,850.3 M1825.4,859.3 1814.7,862.2 1815.4,865.2 1810.1,866.6 1803.4,873.9 1797.1,873.3 M1816.7,838.3 1810.1,839.3 1808.3,842.2 1809.0,846.5 1808.2,851.6 1810.5,857.1 1813.3,857.3 1813.3,852.5 1808.3,853.8 1804.1,850.5 1797.3,849.1 1794.1,849.4 1792.6,848.0 M1792.6,848.0 1792.7,855.6 1785.6,855.6 1785.6,867.4 1790.6,872.6 1797.1,873.3 M1750.7,830.0 1753.6,829.8 1766.4,829.8 1767.8,834.7 1776.7,834.0 1778.5,835.0 1784.9,835.0 1785.2,842.9 1786.6,849.1 1792.6,848.0 M1749.1,871.3 1757.1,871.8 1772.8,871.8 1783.4,874.1 1790.6,872.6 M1797.1,873.3 1792.7,875.2 1782.0,875.2 1782.0,889.2 1778.5,889.2 1778.5,900.1 M1778.5,900.1 1778.5,914.4 1769.2,915.6 1765.8,915.2 M1778.5,900.1 1781.3,908.0 1787.7,905.2 1795.2,904.0 1799.4,899.7 1803.4,895.6 1811.8,889.9 M1797.1,873.3 1800.5,880.1 1805.8,883.5 1811.8,889.9 M1811.8,889.9 1818.6,890.8 M1815.4,865.2 1824.3,869.2 1824.3,876.0 1824.7,880.8 1822.9,886.5 1818.6,890.8 M1818.6,890.8 1821.1,898.1 1821.0,904.4 M1821.0,904.4 1818.6,903.6 1816.9,908.0 1818.6,910.0 1821.5,908.2 1821.0,904.4 M1821.5,908.2 1824.3,908.2 M1803.4,919.3 1809.0,915.2 1812.1,918.4 1807.6,923.6 1804.8,922.1 1803.4,919.3 M1742.2,800.8 1747.5,801.2 1754.6,801.2 1758.9,801.4 1765.0,803.0 M1742.2,805.4 1747.7,805.4 1747.7,801.2 M1754.6,801.2 1758.9,804.0 1758.6,810.8 1756.8,817.5 1751.8,817.5 1748.6,819.0 1746.8,823.1 M1762.5,782.1 1758.9,787.6 1759.3,791.6 1765.0,801.2 1765.0,803.0 M1765.0,801.2 1773.5,796.5 M1773.5,796.5 1771.7,801.2 1770.6,808.3 1765.0,816.8 1763.9,823.1 1758.6,826.3 1755.0,826.4 1753.9,825.4 1750.7,826.8 M1753.9,825.4 1752.2,829.3 1750.7,830.0 M1773.5,796.5 1776.3,790.8 1787.0,794.4 1794.1,790.8 1804.8,790.8 M1812.6,814.0 1811.2,816.8 1810.5,818.6 1811.2,821.1 M1675.9,644.6 1678.2,643.7 1683.9,644.4 1685.3,646.1 1682.8,648.9 1682.5,655.0 1680.7,655.2 1682.5,661.8 1681.0,666.3 M1700.9,637.6 1704.9,639.8 1709.8,640.3 1713.4,641.8 1718.6,642.0 M1734.0,635.4 1732.2,632.9 1731.9,628.9 1732.2,624.9 1729.0,623.3 1731.5,619.2 1734.4,616.1 1736.5,608.6 1730.1,605.9 1728.0,605.6 1724.4,603.1 1722.3,603.1 1716.4,596.9 M1719.4,595.2 1722.6,595.2 1725.1,595.0 1728.2,596.7 1727.6,598.6 1728.7,598.9 M1728.7,598.9 1730.1,601.2 1729.0,602.5 1730.5,604.2 1730.1,605.9 M1729.0,602.5 1727.8,604.2 1728.0,605.6 M1728.7,598.9 1729.0,594.1 1731.5,592.1 1732.4,589.5 1733.0,584.2 M1738.1,574.5 1741.0,575.1 M1758.0,580.6 1758.6,586.0 1759.6,591.2 1760.7,597.5 M1760.7,597.5 1758.2,597.5 1751.1,601.4 1751.8,603.7 1756.4,609.7 M1756.4,609.7 1752.9,613.4 1753.6,616.6 1750.7,616.1 1744.7,616.6 1741.5,616.6 1737.9,615.5 1734.4,616.1 M1741.5,616.6 1741.1,618.7 1744.5,619.7 M1732.2,624.9 1735.4,624.4 1737.4,622.1 1739.4,625.1 1740.4,622.3 1743.3,623.1 1744.5,619.7 1750.7,619.2 1751.4,620.8 1756.1,621.8 1755.7,625.4 1756.2,626.4 M1756.1,621.8 1760.7,621.3 1764.6,620.0 1766.0,617.1 1768.2,613.9 1767.4,610.7 1760.7,608.6 1756.4,609.7 M1760.7,597.5 1765.3,599.5 1767.4,600.9 1770.3,601.4 1774.4,605.9 M1767.4,610.7 1771.7,608.0 1774.4,605.9 1778.5,607.5 1787.5,608.0 1786.1,611.8 M1768.2,613.9 1773.8,615.0 1780.2,611.3 1786.1,611.8 1788.8,613.9 M1788.8,613.9 1782.7,622.3 1779.4,623.6 1774.6,624.9 1769.9,624.6 1766.0,621.8 1764.6,620.0 M1766.0,621.8 1762.8,623.3 1761.8,626.9 1755.7,627.2 M1763.4,628.4 1767.8,628.4 1774.9,629.9 1777.0,634.4 1775.6,636.9 1773.0,641.5 1769.9,639.6 1765.0,633.9 1763.4,628.4 M1774.6,624.9 1774.9,629.9 M1779.4,623.6 1783.4,628.4 1788.1,631.9 1787.9,633.4 1787.0,639.3 1786.8,642.7 1783.8,643.0 1780.6,644.9 1778.6,641.5 1779.5,640.1 1775.6,636.9 M1778.6,641.5 1776.3,644.9 M1780.6,644.9 1780.2,647.5 1782.0,649.6 1778.5,655.0 M1782.0,649.6 1789.0,647.3 1786.8,642.7 M1789.0,647.3 1794.5,646.3 1801.0,645.6 1806.9,644.2 M1801.0,645.6 1801.9,647.3 1800.0,650.1 M1787.9,633.4 1797.7,636.2 1804.4,633.7 1809.0,635.7 M1788.8,613.9 1795.9,615.3 1801.9,612.6 1807.6,621.3 1807.6,627.2 1812.8,627.7 M1801.9,612.6 1810.8,614.2 1814.4,622.3 1810.3,624.4 1807.6,627.2 M1787.5,608.0 1793.0,598.4 1791.3,594.7 1792.3,587.7 1790.9,580.3 1788.4,577.9 1777.8,577.2 M1788.4,577.9 1788.1,574.2 1782.9,572.3 M1782.2,567.1 1795.9,565.0 1801.9,569.7 M1790.9,580.3 1798.0,578.2 1801.9,569.7 1807.4,566.6 1805.8,559.2 1804.6,557.5 1804.8,549.1 1807.1,544.6 M1793.8,555.4 1799.8,555.5 1804.6,557.5 M1791.3,594.7 1804.1,594.1 1816.0,595.8 1820.4,591.2 M1820.4,591.2 1823.6,583.6 1816.9,575.1 1817.2,570.1 1807.4,566.6 M1820.4,591.2 1829.7,593.0 1833.9,600.9 1842.5,603.7 1849.9,605.3 1848.9,614.7 1843.2,618.7 M1806.2,536.8 1814.0,526.8 1819.4,519.1 1813.3,504.6 1814.0,493.5 1810.5,485.1 1814.0,478.1 1808.7,466.6 1810.3,465.1 1816.9,457.5 M1810.3,465.1 1806.6,455.5 1799.8,458.6 1798.7,463.6 1791.6,468.1 1784.2,462.6 1780.4,465.1 M1780.4,465.1 1791.4,475.8 1791.3,489.1 1793.2,495.3 M1780.4,465.1 1771.7,470.5 1765.7,480.0 1762.1,491.8 1758.9,499.6 1756.1,505.4 1750.4,513.6 1750.7,524.5 1752.2,533.1 1749.7,542.8 1747.0,548.1 M1681.6,573.5 1680.7,575.7 1678.5,577.2 1681.4,579.1 1684.9,579.7 M1835.2,671.2 1837.7,670.5 1838.9,668.5 1842.5,667.9 1849.6,667.9 1857.9,666.8 1866.6,666.5 M1866.6,666.5 1864.5,660.9 1864.0,656.4 1866.6,655.2 M1866.6,655.2 1862.6,653.1 1861.8,648.4 1858.5,646.8 1855.1,646.4 M1849.6,637.4 1858.5,638.4 1863.8,641.3 1868.1,640.8 1872.3,644.6 1873.6,644.9 1877.3,648.0 1880.2,644.9 M1861.8,648.4 1867.4,647.5 1872.7,648.7 1873.6,644.9 M1867.4,647.5 1870.9,652.7 1872.7,655.9 1872.7,658.6 M1866.6,655.2 1872.7,658.6 1878.0,655.0 1881.2,660.7 M1857.9,666.8 1853.8,669.9 1853.1,678.6 1845.3,683.1 M1845.3,683.1 1838.2,687.5 1834.5,685.9 M1845.3,683.1 1846.7,688.2 1838.9,690.9 1842.5,695.0 1840.7,697.1 1835.4,700.4 1831.6,699.8 M1846.7,688.2 1851.0,689.2 1857.0,692.6 1866.3,700.4 1872.9,700.8 M1872.9,700.8 1876.1,701.2 1877.0,703.2 1879.4,703.2 M1872.9,700.8 1874.8,697.1 1877.8,697.1 M1866.6,666.5 1868.8,671.6 1870.9,675.1 1868.8,680.3 1871.3,684.6 1875.9,687.1 1877.0,693.0 1880.0,697.3 M1832.2,684.2 1834.1,683.5 1833.8,687.1 1833.6,690.9 1831.6,698.9 M1835.2,677.5 1837.5,679.5 1834.8,682.9 1834.1,683.5 M1829.1,691.7 1831.4,699.1 M1859.4,749.9 1861.3,745.8 1865.6,746.2 1873.8,746.9 1881.6,741.7 1892.2,740.2 M1892.2,740.2 1896.2,748.9 M1892.2,740.2 1902.9,736.4 1905.0,728.8 1903.6,726.1 1894.2,725.1 1890.8,720.5 M1888.0,718.1 1889.4,718.7 1890.8,718.7 M1881.6,622.3 1879.8,620.8 1874.5,613.9 1873.0,611.3 1874.5,607.5 1874.1,603.7 1879.8,603.1 1880.9,599.8 1888.0,593.5 1899.4,597.5 1906.5,597.5" fill="none" stroke="#fff" stroke-width="1.150" stroke-linejoin="round"/>

<g stroke="#1c4370" stroke-width="1.3" fill="none">
<path d="M1274.9 661L1415 679.9M1274.9 661L1556 688.5M1415 679.9L1556 688.5M1415 679.9L1727.2 607.3"/>
<path d="M1556 688.5L1727.2 607.3" stroke="#9c9c9c"/>
</g>
<g fill="#fff" stroke="#1c4370" stroke-width="3.600">
<rect x="1705" y="593.800" width="44.400" height="27" rx="13.500"/>
<rect x="1252.700" y="647.500" width="44.400" height="27" rx="13.500"/>
<rect x="1392.800" y="666.400" width="44.400" height="27" rx="13.500"/>
</g>
<rect x="1530.300" y="673.300" width="51.300" height="30.400" rx="15.200" fill="#1c4370"/>
<g font-family="Liberation Sans, sans-serif" font-size="20" text-anchor="middle" fill="#1c4370">
<text x="1726.700" y="614.200">1</text><text x="1275" y="668">2</text><text x="1415" y="686.900">3</text>
<text x="1556" y="695.800" fill="#fff">3</text>
<text x="1556" y="724" font-size="17">Unassigned</text>
</g>
</svg>
<!-- toggle -->
<div class="a" style="left:20px;top:850px;width:60px;height:30px;border-radius:15px;background:#e3e3e3;border:1.500px solid #9a9a9a"></div>
<div class="a" style="left:23px;top:853px;width:24px;height:24px;border-radius:12px;background:#fff;box-shadow:0 0 2px rgba(0,0,0,.5)"></div>
<div class="t" style="left:100px;top:852.500px;font-size:17.900px;color:#333">High contrast</div>
<!-- zoom -->
<div class="a" style="left:750px;top:801px;width:40px;height:80px;background:#fff;border-radius:3px;box-shadow:0 1px 4px rgba(0,0,0,.35)"></div>
<div class="a" style="left:750px;top:840.500px;width:40px;height:1px;background:#ddd"></div>
<svg style="left:762px;top:813px" width="16" height="16" viewBox="0 0 16 16" stroke="#1d7ad0" stroke-width="1.800"><path d="M8 0v16M0 8h16"/></svg>
<svg style="left:762px;top:860px" width="16" height="2" viewBox="0 0 16 2" stroke="#b0b0b0" stroke-width="1.800"><path d="M0 1h16"/></svg>
</div>
</body>
</html>
